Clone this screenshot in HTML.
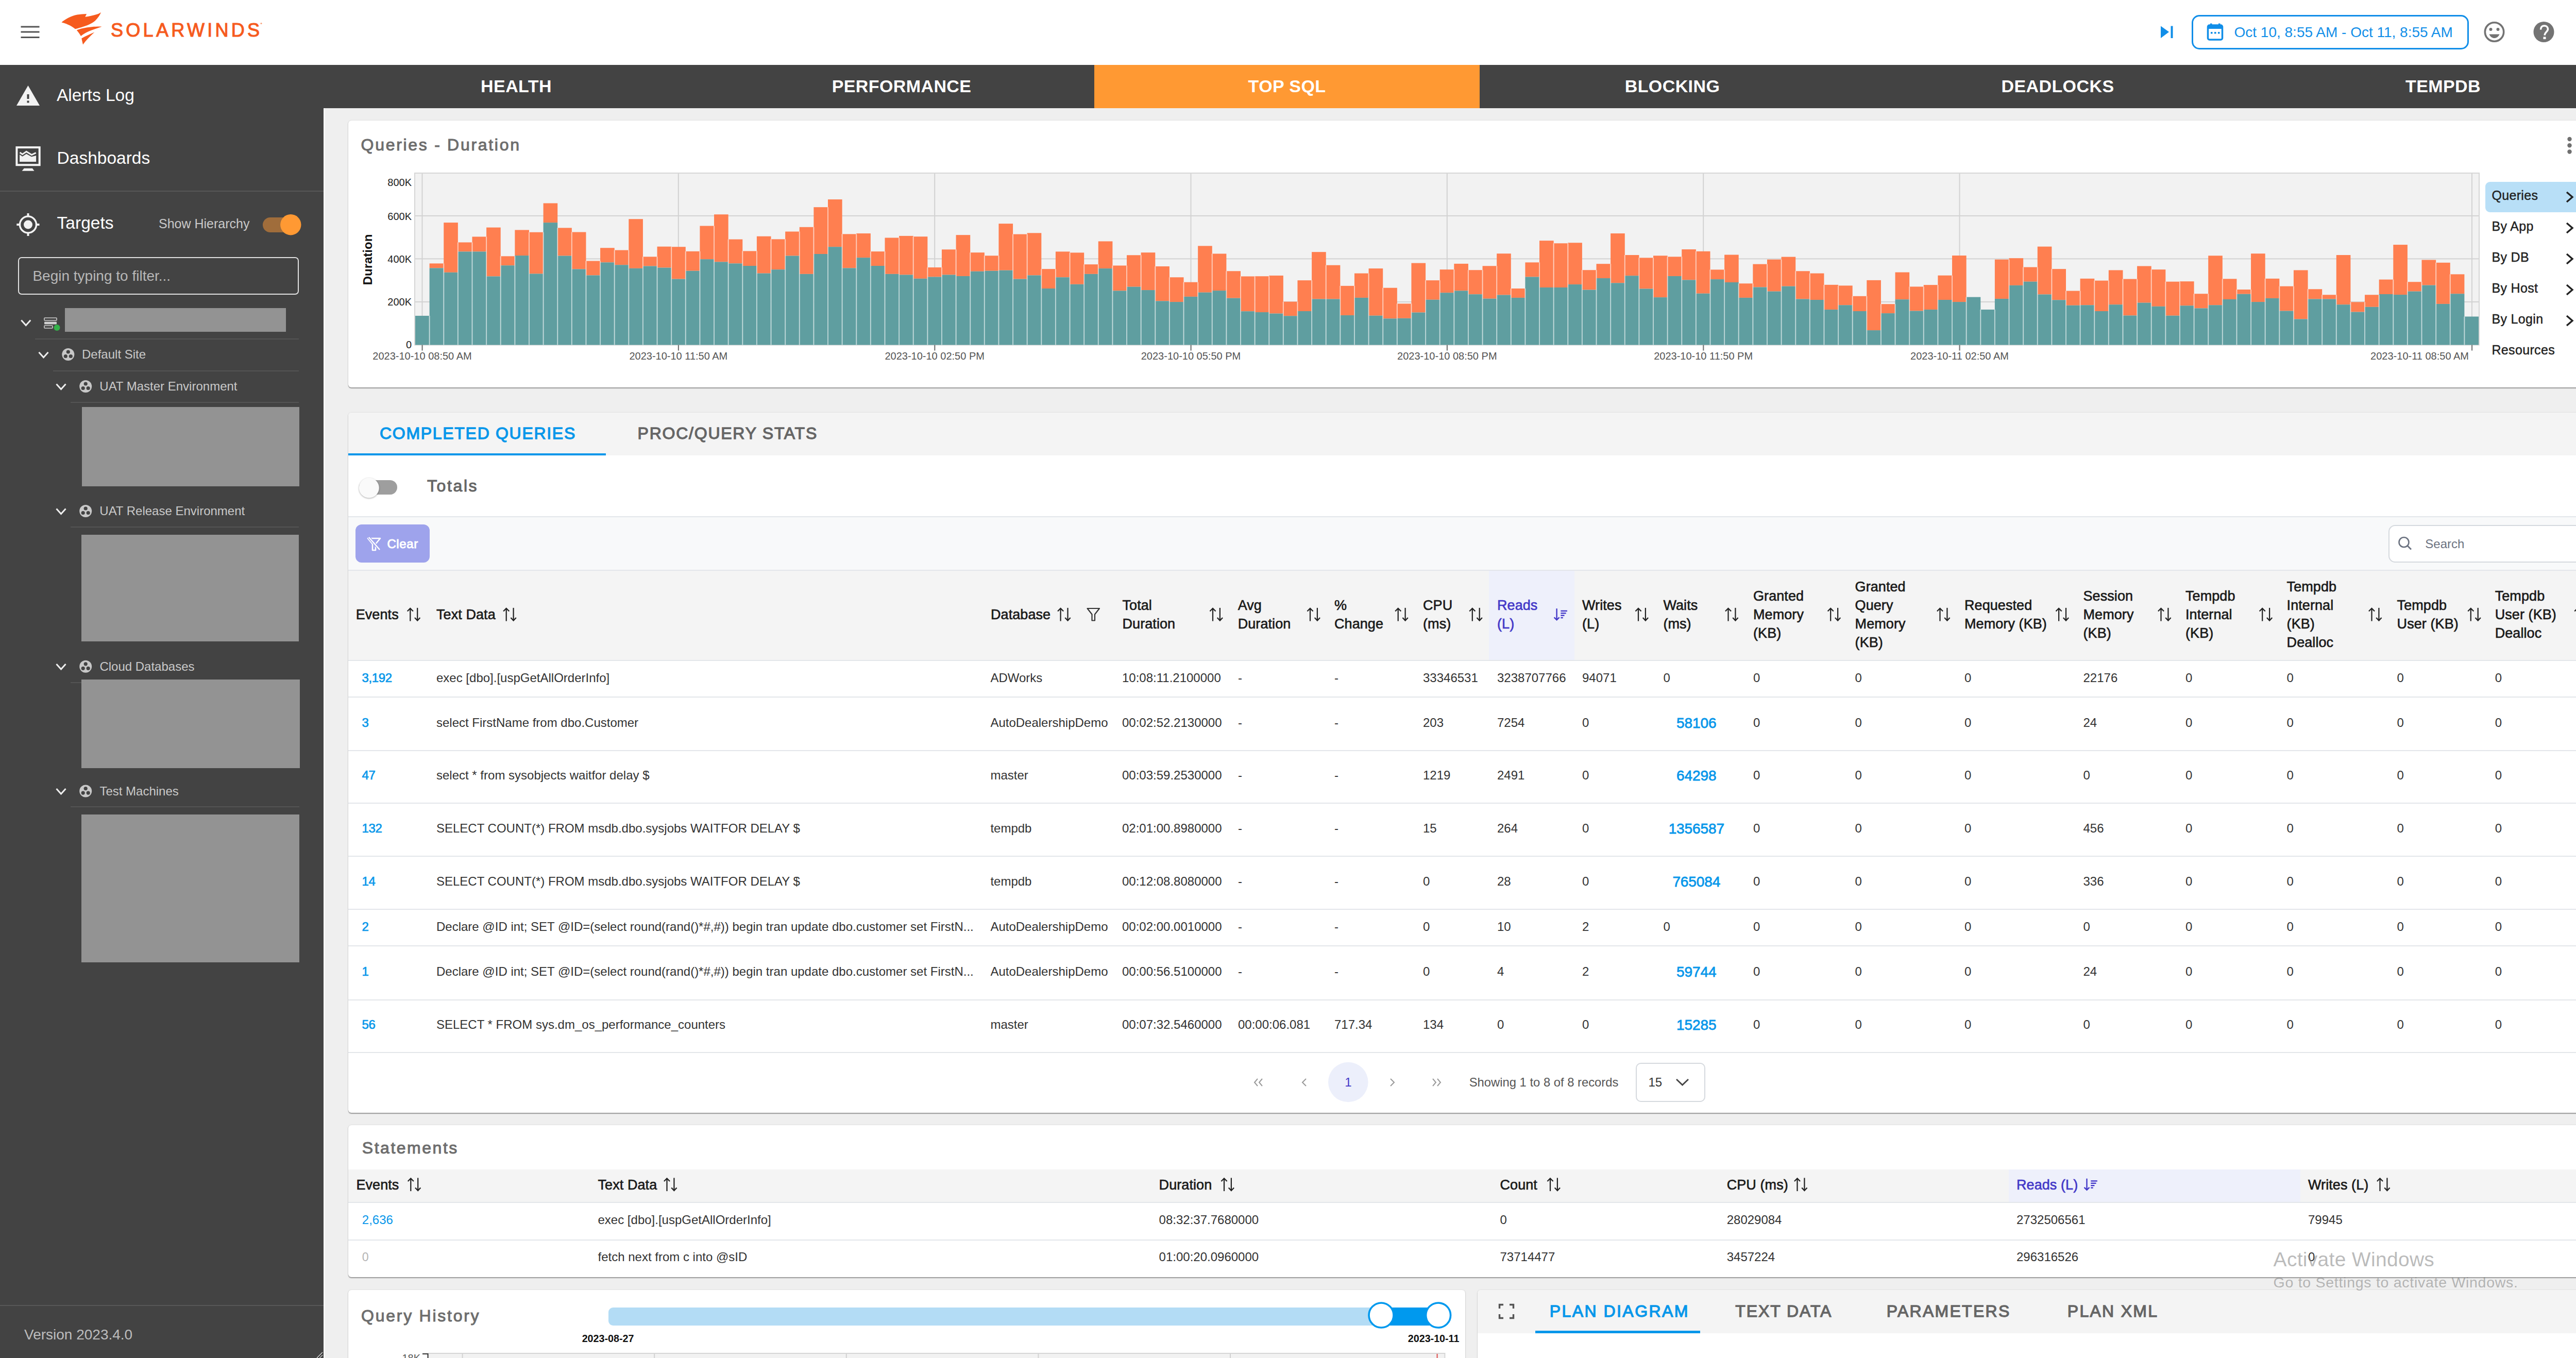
<!DOCTYPE html><html><head><meta charset="utf-8"><style>html,body{margin:0;padding:0;}body{width:5110px;height:2636px;overflow:hidden;position:relative;background:#efefef;font-family:"Liberation Sans", sans-serif;}svg{overflow:visible}</style></head><body><div style="position:absolute;left:0px;top:0px;width:5110px;height:126px;background:#fff"></div>
<svg style="position:absolute;left:30px;top:40px;" width="60" height="45" viewBox="30 40 60 45"><rect x="40.5" y="50.5" width="36" height="3" fill="#555"/><rect x="40.5" y="60.5" width="36" height="3" fill="#555"/><rect x="40.5" y="71" width="36" height="3" fill="#555"/></svg>
<svg style="position:absolute;left:110px;top:15px;" width="100" height="80" viewBox="110 15 100 80"><path d="M119.5,43.6 C125,38 138,31 150,28.6 C156,27.4 162,27 168.1,26.9 L165.3,32.8 C172,32 181,30 189,27.5 C192,26.5 194.5,25 196,24 C194,29 190,35 185,40 C178,46 168,50 158,53 C153,54.5 149,55.6 145.8,56.3 C141,52 133,47 119.5,43.6 Z" fill="#f65b1e"/><path d="M148.8,58.5 C156,55.5 166,53.3 178,52.2 C186,51.6 193,51.5 197.6,51.7 C189,54.5 180,57.5 172,61 C166,63.5 161,66.5 157,70 C154.5,65.5 151.5,61.5 148.8,58.5 Z" fill="#f65b1e"/><path d="M158.3,74.5 C166,70.5 175,66 183.4,62.6 C175,70 167,78.5 161,86.6 C160,82 159,78 158.3,74.5 Z" fill="#f65b1e"/></svg>
<div style="position:absolute;left:215px;top:40.5px;font-size:36px;line-height:36px;color:#f65b1e;font-weight:400;white-space:nowrap;letter-spacing:5.30px;-webkit-text-stroke:1.1px #f65b1e;">SOLARWINDS</div>
<svg style="position:absolute;left:500px;top:40px;" width="12" height="12" viewBox="500 40 12 12"><circle cx="507" cy="45.5" r="1.6" fill="#f8a27a"/></svg>
<svg style="position:absolute;left:4185px;top:45px;" width="40" height="35" viewBox="4185 45 40 35"><path d="M4194,50.5 L4210,62 L4194,74 Z" fill="#118ee8"/><rect x="4213.5" y="50.5" width="4" height="23.5" fill="#118ee8"/></svg>
<div style="position:absolute;left:4254px;top:29px;width:538px;height:67px;box-sizing:border-box;border:3px solid #118ee8;border-radius:15px;background:#fff"></div>
<svg style="position:absolute;left:4280px;top:40px;" width="40" height="42" viewBox="4280 40 40 42"><rect x="4285.5" y="49" width="28" height="28" rx="3" fill="none" stroke="#118ee8" stroke-width="3.5"/><rect x="4285.5" y="49" width="28" height="7" fill="#118ee8"/><rect x="4290" y="45.5" width="3.5" height="6" fill="#118ee8"/><rect x="4306" y="45.5" width="3.5" height="6" fill="#118ee8"/><rect x="4291" y="62" width="3.5" height="3.5" fill="#118ee8"/><rect x="4298" y="62" width="3.5" height="3.5" fill="#118ee8"/><rect x="4305" y="62" width="3.5" height="3.5" fill="#118ee8"/></svg>
<div style="position:absolute;left:4336.5px;top:48.5px;font-size:28px;line-height:28px;color:#118ee8;font-weight:400;white-space:nowrap;">Oct 10, 8:55 AM - Oct 11, 8:55 AM</div>
<svg style="position:absolute;left:4815px;top:36px;" width="53" height="52" viewBox="4815 36 53 52"><circle cx="4841.5" cy="62" r="18.2" fill="none" stroke="#737373" stroke-width="3.6"/><circle cx="4834.5" cy="57" r="3" fill="#737373"/><circle cx="4848.5" cy="57" r="3" fill="#737373"/><path d="M4831.5,66.5 L4851.5,66.5 C4849,72 4845.5,74 4841.5,74 C4837.5,74 4834,72 4831.5,66.5 Z" fill="#737373"/></svg>
<svg style="position:absolute;left:4912px;top:36px;" width="52" height="52" viewBox="4912 36 52 52"><circle cx="4937.5" cy="62" r="20" fill="#737373"/><path d="M4931.5,57.5 C4931.5,52.5 4934.5,50 4938.5,50 C4942.5,50 4945.5,52.5 4945.5,56.5 C4945.5,61.5 4939.5,62 4939,68.5" fill="none" stroke="#fff" stroke-width="3.6"/><rect x="4936.5" y="71.5" width="5" height="4.5" fill="#fff"/></svg>
<svg style="position:absolute;left:5005px;top:38px;" width="57" height="48" viewBox="5005 38 57 48"><circle cx="5026" cy="52.5" r="9.2" fill="#737373"/><path d="M5009.5,81 L5009.5,77 C5009.5,69 5017,66.5 5026,66.5 C5030,66.5 5033.5,67 5036,68 L5040,81 Z" fill="#737373"/><path d="M5046.5,60.5 L5057,64.5 L5057,70 C5057,76 5052.5,80.5 5046.5,82 C5040.5,80.5 5036,76 5036,70 L5036,64.5 Z" fill="#737373" stroke="#fff" stroke-width="2"/><path d="M5047,64 L5053.5,66.5 L5053.5,70 C5053.5,74 5051,77 5047,78.5 Z" fill="#fff"/></svg>
<div style="position:absolute;left:0px;top:126px;width:628px;height:2510px;background:#434343"></div>
<svg style="position:absolute;left:28px;top:160px;" width="54" height="50" viewBox="28 160 54 50"><path d="M54.5,166 L77,205 L32,205 Z" fill="#f2f2f2"/><rect x="52.5" y="183" width="4" height="9" fill="#434343"/><rect x="52.5" y="195.5" width="4" height="4" fill="#434343"/></svg>
<div style="position:absolute;left:110px;top:167.6px;font-size:33.5px;line-height:33.5px;color:#fff;font-weight:400;white-space:nowrap;">Alerts Log</div>
<svg style="position:absolute;left:26px;top:278px;" width="58" height="58" viewBox="26 278 58 58"><rect x="32.4" y="286.1" width="44.3" height="34.1" fill="none" stroke="#f4f4f4" stroke-width="4"/><path d="M38.1,300.1 L43.5,303.7 L51.2,298.8 L61.1,304.2 L70.1,301.9 L70.1,314.1 L38.1,314.1 Z" fill="#f2f2f2"/><polyline points="38.5,296.1 43.5,299.4 51.2,294.2 61.4,300.6 69.7,296.6" fill="none" stroke="#f2f2f2" stroke-width="3"/><path d="M46.7,326.8 L62.9,326.8 L66.5,331.7 L42.6,331.7 Z" fill="#f4f4f4"/></svg>
<div style="position:absolute;left:110.6px;top:290.1px;font-size:33.5px;line-height:33.5px;color:#fff;font-weight:400;white-space:nowrap;">Dashboards</div>
<div style="position:absolute;left:0px;top:370px;width:628px;height:2px;background:#575757"></div>
<svg style="position:absolute;left:28px;top:410px;" width="54" height="52" viewBox="28 410 54 52"><circle cx="54.5" cy="436" r="16" fill="none" stroke="#f2f2f2" stroke-width="3.5"/><circle cx="54.5" cy="436" r="8.5" fill="#f2f2f2"/><rect x="52.5" y="414" width="4" height="6" fill="#f2f2f2"/><rect x="52.5" y="452" width="4" height="6" fill="#f2f2f2"/><rect x="32.3" y="434" width="6" height="4" fill="#f2f2f2"/><rect x="70.5" y="434" width="6" height="4" fill="#f2f2f2"/></svg>
<div style="position:absolute;left:110.6px;top:415.6px;font-size:33.5px;line-height:33.5px;color:#fff;font-weight:400;white-space:nowrap;">Targets</div>
<div style="position:absolute;left:308px;top:421.5px;font-size:25px;line-height:25px;color:#c9c9c9;font-weight:400;white-space:nowrap;">Show Hierarchy</div>
<div style="position:absolute;left:510px;top:422px;width:74px;height:29px;background:#a06d3b;border-radius:15px"></div>
<svg style="position:absolute;left:540px;top:412px;" width="50" height="48" viewBox="540 412 50 48"><circle cx="564.3" cy="436.2" r="20.2" fill="#ff9933"/></svg>
<div style="position:absolute;left:35px;top:499px;width:545px;height:73px;box-sizing:border-box;border:2px solid #e0e0e0;border-radius:7px"></div>
<div style="position:absolute;left:63.4px;top:522.1px;font-size:28px;line-height:28px;color:#b8b8b8;font-weight:400;white-space:nowrap;">Begin typing to filter...</div>
<div style="position:absolute;left:125.5px;top:597.5px;width:429.0px;height:46.0px;background:#939393"></div>
<svg style="position:absolute;left:80px;top:610px;" width="40" height="36" viewBox="80 610 40 36"><polyline points="41.3,621.5 50.3,631.5 59.3,621.5" fill="none" stroke="#eee" stroke-width="3"/><rect x="86" y="617" width="24" height="5" rx="1" fill="none" stroke="#cfcfcf" stroke-width="1.6"/><rect x="86" y="624.5" width="24" height="5" rx="1" fill="#cfcfcf"/><rect x="86" y="632" width="16" height="5" rx="1" fill="none" stroke="#cfcfcf" stroke-width="1.6"/><circle cx="110.5" cy="636" r="6" fill="#34b24a"/></svg>
<div style="position:absolute;left:68px;top:657px;width:512px;height:2px;background:#545454"></div>
<svg style="position:absolute;left:70px;top:670px;" width="80" height="40" viewBox="70 670 80 40"><polyline points="75.5,683.7 84.5,693.7 93.5,683.7" fill="none" stroke="#eee" stroke-width="3"/><circle cx="132.3" cy="688" r="12" fill="#c8c8c8"/><circle cx="132.3" cy="683" r="3.6" fill="#434343"/><circle cx="127.30000000000001" cy="691.5" r="3.6" fill="#434343"/><circle cx="137.3" cy="691.5" r="3.6" fill="#434343"/></svg>
<div style="position:absolute;left:159px;top:675.7px;font-size:24px;line-height:24px;color:#c9c9c9;font-weight:400;white-space:nowrap;">Default Site</div>
<div style="position:absolute;left:102.6px;top:719px;width:477.4px;height:2px;background:#545454"></div>
<svg style="position:absolute;left:100px;top:735px;" width="90" height="30" viewBox="100 735 90 30"><polyline points="109.5,745.5 118.5,755.5 127.5,745.5" fill="none" stroke="#eee" stroke-width="3"/><circle cx="166.2" cy="750" r="12" fill="#c8c8c8"/><circle cx="166.2" cy="745" r="3.6" fill="#434343"/><circle cx="161.2" cy="753.5" r="3.6" fill="#434343"/><circle cx="171.2" cy="753.5" r="3.6" fill="#434343"/></svg>
<div style="position:absolute;left:193.3px;top:737.7px;font-size:24px;line-height:24px;color:#c9c9c9;font-weight:400;white-space:nowrap;">UAT Master Environment</div>
<div style="position:absolute;left:137.4px;top:780px;width:442.6px;height:2px;background:#545454"></div>
<div style="position:absolute;left:159px;top:790px;width:421.6px;height:154px;background:#939393"></div>
<svg style="position:absolute;left:100px;top:977px;" width="90" height="30" viewBox="100 977 90 30"><polyline points="109.5,987.5 118.5,997.5 127.5,987.5" fill="none" stroke="#eee" stroke-width="3"/><circle cx="166.2" cy="992" r="12" fill="#c8c8c8"/><circle cx="166.2" cy="987" r="3.6" fill="#434343"/><circle cx="161.2" cy="995.5" r="3.6" fill="#434343"/><circle cx="171.2" cy="995.5" r="3.6" fill="#434343"/></svg>
<div style="position:absolute;left:193.3px;top:980.2px;font-size:24px;line-height:24px;color:#c9c9c9;font-weight:400;white-space:nowrap;">UAT Release Environment</div>
<div style="position:absolute;left:137px;top:1022px;width:443px;height:2px;background:#545454"></div>
<div style="position:absolute;left:158.4px;top:1037.6px;width:421.6px;height:207.20000000000005px;background:#939393"></div>
<svg style="position:absolute;left:100px;top:1279px;" width="90" height="30" viewBox="100 1279 90 30"><polyline points="109.5,1289.0 118.5,1299.0 127.5,1289.0" fill="none" stroke="#eee" stroke-width="3"/><circle cx="166.2" cy="1293.8" r="12" fill="#c8c8c8"/><circle cx="166.2" cy="1288.8" r="3.6" fill="#434343"/><circle cx="161.2" cy="1297.3" r="3.6" fill="#434343"/><circle cx="171.2" cy="1297.3" r="3.6" fill="#434343"/></svg>
<div style="position:absolute;left:193.4px;top:1281.9px;font-size:24px;line-height:24px;color:#c9c9c9;font-weight:400;white-space:nowrap;">Cloud Databases</div>
<div style="position:absolute;left:137px;top:1324px;width:23px;height:2px;background:#545454"></div>
<div style="position:absolute;left:158px;top:1318.5px;width:423.5px;height:172.9000000000001px;background:#939393"></div>
<svg style="position:absolute;left:100px;top:1521px;" width="90" height="30" viewBox="100 1521 90 30"><polyline points="109.5,1531.0 118.5,1541.0 127.5,1531.0" fill="none" stroke="#eee" stroke-width="3"/><circle cx="166.2" cy="1535.6" r="12" fill="#c8c8c8"/><circle cx="166.2" cy="1530.6" r="3.6" fill="#434343"/><circle cx="161.2" cy="1539.1" r="3.6" fill="#434343"/><circle cx="171.2" cy="1539.1" r="3.6" fill="#434343"/></svg>
<div style="position:absolute;left:193.4px;top:1523.7px;font-size:24px;line-height:24px;color:#c9c9c9;font-weight:400;white-space:nowrap;">Test Machines</div>
<div style="position:absolute;left:137px;top:1565px;width:443.6px;height:2px;background:#545454"></div>
<div style="position:absolute;left:157.5px;top:1581.4px;width:423.1px;height:286.5999999999999px;background:#939393"></div>
<div style="position:absolute;left:0px;top:2533px;width:628px;height:2px;background:#575757"></div>
<div style="position:absolute;left:47px;top:2576.7px;font-size:28px;line-height:28px;color:#bdbdbd;font-weight:400;white-space:nowrap;">Version 2023.4.0</div>
<svg style="position:absolute;left:610px;top:2615px;" width="18" height="21" viewBox="610 2615 18 21"><path d="M626,2625 L615,2636 M626,2630 L620,2636" stroke="#cfcfcf" stroke-width="1.6"/><path d="M627,2627 L618,2636" stroke="#222" stroke-width="1.2"/></svg>
<div style="position:absolute;left:628px;top:126px;width:4482px;height:84px;background:#434343"></div>
<div style="position:absolute;left:2124px;top:126px;width:748px;height:84px;background:#ff9933"></div>
<div style="position:absolute;left:-498px;width:3000px;text-align:center;top:149.7px;font-size:34px;line-height:34px;color:#fff;font-weight:700;white-space:nowrap;letter-spacing:0.40px;">HEALTH</div>
<div style="position:absolute;left:250px;width:3000px;text-align:center;top:149.7px;font-size:34px;line-height:34px;color:#fff;font-weight:700;white-space:nowrap;letter-spacing:0.40px;">PERFORMANCE</div>
<div style="position:absolute;left:998px;width:3000px;text-align:center;top:149.7px;font-size:34px;line-height:34px;color:#fff;font-weight:700;white-space:nowrap;letter-spacing:0.40px;">TOP SQL</div>
<div style="position:absolute;left:1746px;width:3000px;text-align:center;top:149.7px;font-size:34px;line-height:34px;color:#fff;font-weight:700;white-space:nowrap;letter-spacing:0.40px;">BLOCKING</div>
<div style="position:absolute;left:2494px;width:3000px;text-align:center;top:149.7px;font-size:34px;line-height:34px;color:#fff;font-weight:700;white-space:nowrap;letter-spacing:0.40px;">DEADLOCKS</div>
<div style="position:absolute;left:3242px;width:3000px;text-align:center;top:149.7px;font-size:34px;line-height:34px;color:#fff;font-weight:700;white-space:nowrap;letter-spacing:0.40px;">TEMPDB</div>
<div style="position:absolute;left:5083px;top:210px;width:27px;height:2426px;background:#f0f0f0"></div>
<div style="position:absolute;left:5088px;top:244px;width:22px;height:1945px;background:#c1c1c1"></div>
<svg style="position:absolute;left:5088px;top:215px;" width="22" height="25" viewBox="5088 215 22 25"><path d="M5093.5,232 L5099,224.5 L5104.5,232 Z" fill="#a3a3a3"/></svg>
<svg style="position:absolute;left:5088px;top:2615px;" width="22" height="21" viewBox="5088 2615 22 21"><path d="M5093.5,2621 L5099,2628.5 L5104.5,2621 Z" fill="#505050"/></svg>
<div style="position:absolute;left:628px;top:210px;width:4455px;height:2426px;background:#efefef"></div>
<div style="position:absolute;left:628px;top:210px;width:2.5px;height:2426px;background:#fbfbfb"></div>
<div style="position:absolute;left:676px;top:234px;width:4359px;height:518px;background:#fff;border-radius:6px;box-shadow:0 1.5px 1.5px rgba(0,0,0,0.34), 0 0 2.5px rgba(0,0,0,0.12);"></div>
<div style="position:absolute;left:700.6px;top:265.2px;font-size:32px;line-height:32px;color:#6e6e6e;font-weight:400;white-space:nowrap;letter-spacing:2.70px;-webkit-text-stroke:1.05px #6e6e6e;">Queries - Duration</div>
<svg style="position:absolute;left:4975px;top:260px;" width="25" height="45" viewBox="4975 260 25 45"><circle cx="4987.5" cy="270" r="4.2" fill="#707070"/><circle cx="4987.5" cy="282.3" r="4.2" fill="#707070"/><circle cx="4987.5" cy="294.5" r="4.2" fill="#707070"/></svg>
<svg style="position:absolute;left:790px;top:325px;" width="4040" height="365" viewBox="790 325 4040 365"><rect x="806" y="337" width="4005" height="332.5" fill="#f2f2f2"/><rect x="806" y="585.0" width="4005" height="2" fill="#d2d2d2"/><rect x="806" y="501.4" width="4005" height="2" fill="#d2d2d2"/><rect x="806" y="417.9" width="4005" height="2" fill="#d2d2d2"/><rect x="818.5" y="337" width="2" height="332.5" fill="#d2d2d2"/><rect x="1315.8" y="337" width="2" height="332.5" fill="#d2d2d2"/><rect x="1813.2" y="337" width="2" height="332.5" fill="#d2d2d2"/><rect x="2310.5" y="337" width="2" height="332.5" fill="#d2d2d2"/><rect x="2807.8" y="337" width="2" height="332.5" fill="#d2d2d2"/><rect x="3305.2" y="337" width="2" height="332.5" fill="#d2d2d2"/><rect x="3802.5" y="337" width="2" height="332.5" fill="#d2d2d2"/><rect x="4797.0" y="337" width="2" height="332.5" fill="#d2d2d2"/><rect x="805" y="336" width="4007" height="333.5" fill="none" stroke="#d6d6d6" stroke-width="2"/><rect x="806.00" y="612.96" width="27.62" height="56.54" fill="#5f9ea0"/><rect x="833.62" y="511.40" width="27.62" height="8.95" fill="#ff7f50"/><rect x="833.62" y="520.35" width="27.62" height="149.15" fill="#5f9ea0"/><rect x="861.24" y="432.10" width="27.62" height="96.70" fill="#ff7f50"/><rect x="861.24" y="528.80" width="27.62" height="140.70" fill="#5f9ea0"/><rect x="888.86" y="470.47" width="27.62" height="17.91" fill="#ff7f50"/><rect x="888.86" y="488.38" width="27.62" height="181.12" fill="#5f9ea0"/><rect x="916.48" y="459.47" width="27.62" height="28.91" fill="#ff7f50"/><rect x="916.48" y="488.38" width="27.62" height="181.12" fill="#5f9ea0"/><rect x="944.10" y="441.56" width="27.62" height="94.91" fill="#ff7f50"/><rect x="944.10" y="536.47" width="27.62" height="133.03" fill="#5f9ea0"/><rect x="971.72" y="497.33" width="27.62" height="17.91" fill="#ff7f50"/><rect x="971.72" y="515.24" width="27.62" height="154.26" fill="#5f9ea0"/><rect x="999.34" y="446.42" width="27.62" height="49.63" fill="#ff7f50"/><rect x="999.34" y="496.05" width="27.62" height="173.45" fill="#5f9ea0"/><rect x="1026.97" y="450.77" width="27.62" height="80.58" fill="#ff7f50"/><rect x="1026.97" y="531.35" width="27.62" height="138.15" fill="#5f9ea0"/><rect x="1054.59" y="394.49" width="27.62" height="37.61" fill="#ff7f50"/><rect x="1054.59" y="432.10" width="27.62" height="237.40" fill="#5f9ea0"/><rect x="1082.21" y="442.33" width="27.62" height="54.23" fill="#ff7f50"/><rect x="1082.21" y="496.56" width="27.62" height="172.94" fill="#5f9ea0"/><rect x="1109.83" y="450.51" width="27.62" height="71.89" fill="#ff7f50"/><rect x="1109.83" y="522.40" width="27.62" height="147.10" fill="#5f9ea0"/><rect x="1137.45" y="506.54" width="27.62" height="27.88" fill="#ff7f50"/><rect x="1137.45" y="534.42" width="27.62" height="135.08" fill="#5f9ea0"/><rect x="1165.07" y="481.21" width="27.62" height="28.14" fill="#ff7f50"/><rect x="1165.07" y="509.35" width="27.62" height="160.15" fill="#5f9ea0"/><rect x="1192.69" y="485.56" width="27.62" height="28.65" fill="#ff7f50"/><rect x="1192.69" y="514.21" width="27.62" height="155.29" fill="#5f9ea0"/><rect x="1220.31" y="425.19" width="27.62" height="95.68" fill="#ff7f50"/><rect x="1220.31" y="520.86" width="27.62" height="148.64" fill="#5f9ea0"/><rect x="1247.93" y="498.35" width="27.62" height="18.16" fill="#ff7f50"/><rect x="1247.93" y="516.52" width="27.62" height="152.98" fill="#5f9ea0"/><rect x="1275.55" y="478.65" width="27.62" height="40.93" fill="#ff7f50"/><rect x="1275.55" y="519.59" width="27.62" height="149.91" fill="#5f9ea0"/><rect x="1303.17" y="479.17" width="27.62" height="62.42" fill="#ff7f50"/><rect x="1303.17" y="541.59" width="27.62" height="127.91" fill="#5f9ea0"/><rect x="1330.79" y="487.86" width="27.62" height="37.86" fill="#ff7f50"/><rect x="1330.79" y="525.73" width="27.62" height="143.77" fill="#5f9ea0"/><rect x="1358.41" y="438.49" width="27.62" height="64.72" fill="#ff7f50"/><rect x="1358.41" y="503.21" width="27.62" height="166.29" fill="#5f9ea0"/><rect x="1386.03" y="416.23" width="27.62" height="92.10" fill="#ff7f50"/><rect x="1386.03" y="508.33" width="27.62" height="161.17" fill="#5f9ea0"/><rect x="1413.66" y="464.58" width="27.62" height="46.82" fill="#ff7f50"/><rect x="1413.66" y="511.40" width="27.62" height="158.10" fill="#5f9ea0"/><rect x="1441.28" y="487.35" width="27.62" height="28.65" fill="#ff7f50"/><rect x="1441.28" y="516.00" width="27.62" height="153.50" fill="#5f9ea0"/><rect x="1468.90" y="458.70" width="27.62" height="71.89" fill="#ff7f50"/><rect x="1468.90" y="530.59" width="27.62" height="138.91" fill="#5f9ea0"/><rect x="1496.52" y="464.33" width="27.62" height="58.84" fill="#ff7f50"/><rect x="1496.52" y="523.17" width="27.62" height="146.33" fill="#5f9ea0"/><rect x="1524.14" y="449.49" width="27.62" height="47.07" fill="#ff7f50"/><rect x="1524.14" y="496.56" width="27.62" height="172.94" fill="#5f9ea0"/><rect x="1551.76" y="440.79" width="27.62" height="91.07" fill="#ff7f50"/><rect x="1551.76" y="531.86" width="27.62" height="137.64" fill="#5f9ea0"/><rect x="1579.38" y="402.16" width="27.62" height="90.82" fill="#ff7f50"/><rect x="1579.38" y="492.98" width="27.62" height="176.52" fill="#5f9ea0"/><rect x="1607.00" y="387.07" width="27.62" height="92.10" fill="#ff7f50"/><rect x="1607.00" y="479.17" width="27.62" height="190.33" fill="#5f9ea0"/><rect x="1634.62" y="454.35" width="27.62" height="66.00" fill="#ff7f50"/><rect x="1634.62" y="520.35" width="27.62" height="149.15" fill="#5f9ea0"/><rect x="1662.24" y="453.07" width="27.62" height="47.07" fill="#ff7f50"/><rect x="1662.24" y="500.14" width="27.62" height="169.36" fill="#5f9ea0"/><rect x="1689.86" y="488.12" width="27.62" height="27.88" fill="#ff7f50"/><rect x="1689.86" y="516.00" width="27.62" height="153.50" fill="#5f9ea0"/><rect x="1717.48" y="461.51" width="27.62" height="70.35" fill="#ff7f50"/><rect x="1717.48" y="531.86" width="27.62" height="137.64" fill="#5f9ea0"/><rect x="1745.10" y="457.93" width="27.62" height="75.47" fill="#ff7f50"/><rect x="1745.10" y="533.40" width="27.62" height="136.10" fill="#5f9ea0"/><rect x="1772.72" y="459.21" width="27.62" height="81.61" fill="#ff7f50"/><rect x="1772.72" y="540.82" width="27.62" height="128.68" fill="#5f9ea0"/><rect x="1800.34" y="519.07" width="27.62" height="18.42" fill="#ff7f50"/><rect x="1800.34" y="537.49" width="27.62" height="132.01" fill="#5f9ea0"/><rect x="1827.97" y="484.28" width="27.62" height="49.12" fill="#ff7f50"/><rect x="1827.97" y="533.40" width="27.62" height="136.10" fill="#5f9ea0"/><rect x="1855.59" y="456.14" width="27.62" height="79.82" fill="#ff7f50"/><rect x="1855.59" y="535.96" width="27.62" height="133.54" fill="#5f9ea0"/><rect x="1883.21" y="490.17" width="27.62" height="36.58" fill="#ff7f50"/><rect x="1883.21" y="526.75" width="27.62" height="142.75" fill="#5f9ea0"/><rect x="1910.83" y="496.31" width="27.62" height="29.42" fill="#ff7f50"/><rect x="1910.83" y="525.73" width="27.62" height="143.77" fill="#5f9ea0"/><rect x="1938.45" y="434.14" width="27.62" height="90.56" fill="#ff7f50"/><rect x="1938.45" y="524.70" width="27.62" height="144.80" fill="#5f9ea0"/><rect x="1966.07" y="454.61" width="27.62" height="86.98" fill="#ff7f50"/><rect x="1966.07" y="541.59" width="27.62" height="127.91" fill="#5f9ea0"/><rect x="1993.69" y="452.30" width="27.62" height="82.12" fill="#ff7f50"/><rect x="1993.69" y="534.42" width="27.62" height="135.08" fill="#5f9ea0"/><rect x="2021.31" y="522.14" width="27.62" height="37.86" fill="#ff7f50"/><rect x="2021.31" y="560.01" width="27.62" height="109.49" fill="#5f9ea0"/><rect x="2048.93" y="488.38" width="27.62" height="49.88" fill="#ff7f50"/><rect x="2048.93" y="538.26" width="27.62" height="131.24" fill="#5f9ea0"/><rect x="2076.55" y="490.42" width="27.62" height="61.40" fill="#ff7f50"/><rect x="2076.55" y="551.82" width="27.62" height="117.68" fill="#5f9ea0"/><rect x="2104.17" y="513.19" width="27.62" height="18.67" fill="#ff7f50"/><rect x="2104.17" y="531.86" width="27.62" height="137.64" fill="#5f9ea0"/><rect x="2131.79" y="468.42" width="27.62" height="52.70" fill="#ff7f50"/><rect x="2131.79" y="521.12" width="27.62" height="148.38" fill="#5f9ea0"/><rect x="2159.41" y="515.49" width="27.62" height="48.86" fill="#ff7f50"/><rect x="2159.41" y="564.35" width="27.62" height="105.15" fill="#5f9ea0"/><rect x="2187.03" y="495.28" width="27.62" height="61.40" fill="#ff7f50"/><rect x="2187.03" y="556.68" width="27.62" height="112.82" fill="#5f9ea0"/><rect x="2214.66" y="490.17" width="27.62" height="72.91" fill="#ff7f50"/><rect x="2214.66" y="563.07" width="27.62" height="106.43" fill="#5f9ea0"/><rect x="2242.28" y="517.03" width="27.62" height="67.28" fill="#ff7f50"/><rect x="2242.28" y="584.31" width="27.62" height="85.19" fill="#5f9ea0"/><rect x="2269.90" y="538.26" width="27.62" height="47.84" fill="#ff7f50"/><rect x="2269.90" y="586.10" width="27.62" height="83.40" fill="#5f9ea0"/><rect x="2297.52" y="547.73" width="27.62" height="28.14" fill="#ff7f50"/><rect x="2297.52" y="575.87" width="27.62" height="93.63" fill="#5f9ea0"/><rect x="2325.14" y="477.38" width="27.62" height="90.30" fill="#ff7f50"/><rect x="2325.14" y="567.68" width="27.62" height="101.82" fill="#5f9ea0"/><rect x="2352.76" y="492.47" width="27.62" height="71.63" fill="#ff7f50"/><rect x="2352.76" y="564.10" width="27.62" height="105.40" fill="#5f9ea0"/><rect x="2380.38" y="526.24" width="27.62" height="52.44" fill="#ff7f50"/><rect x="2380.38" y="578.68" width="27.62" height="90.82" fill="#5f9ea0"/><rect x="2408.00" y="536.47" width="27.62" height="67.79" fill="#ff7f50"/><rect x="2408.00" y="604.26" width="27.62" height="65.24" fill="#5f9ea0"/><rect x="2435.62" y="536.21" width="27.62" height="69.84" fill="#ff7f50"/><rect x="2435.62" y="606.05" width="27.62" height="63.45" fill="#5f9ea0"/><rect x="2463.24" y="534.93" width="27.62" height="73.68" fill="#ff7f50"/><rect x="2463.24" y="608.61" width="27.62" height="60.89" fill="#5f9ea0"/><rect x="2490.86" y="585.59" width="27.62" height="27.63" fill="#ff7f50"/><rect x="2490.86" y="613.22" width="27.62" height="56.28" fill="#5f9ea0"/><rect x="2518.48" y="544.14" width="27.62" height="59.86" fill="#ff7f50"/><rect x="2518.48" y="604.01" width="27.62" height="65.49" fill="#5f9ea0"/><rect x="2546.10" y="489.14" width="27.62" height="91.33" fill="#ff7f50"/><rect x="2546.10" y="580.47" width="27.62" height="89.03" fill="#5f9ea0"/><rect x="2573.72" y="514.72" width="27.62" height="65.75" fill="#ff7f50"/><rect x="2573.72" y="580.47" width="27.62" height="89.03" fill="#5f9ea0"/><rect x="2601.34" y="554.89" width="27.62" height="57.05" fill="#ff7f50"/><rect x="2601.34" y="611.94" width="27.62" height="57.56" fill="#5f9ea0"/><rect x="2628.97" y="530.59" width="27.62" height="47.33" fill="#ff7f50"/><rect x="2628.97" y="577.91" width="27.62" height="91.59" fill="#5f9ea0"/><rect x="2656.59" y="521.12" width="27.62" height="91.58" fill="#ff7f50"/><rect x="2656.59" y="612.70" width="27.62" height="56.80" fill="#5f9ea0"/><rect x="2684.21" y="558.73" width="27.62" height="59.61" fill="#ff7f50"/><rect x="2684.21" y="618.33" width="27.62" height="51.17" fill="#5f9ea0"/><rect x="2711.83" y="589.42" width="27.62" height="28.40" fill="#ff7f50"/><rect x="2711.83" y="617.82" width="27.62" height="51.68" fill="#5f9ea0"/><rect x="2739.45" y="510.63" width="27.62" height="95.93" fill="#ff7f50"/><rect x="2739.45" y="606.56" width="27.62" height="62.94" fill="#5f9ea0"/><rect x="2767.07" y="544.14" width="27.62" height="37.61" fill="#ff7f50"/><rect x="2767.07" y="581.75" width="27.62" height="87.75" fill="#5f9ea0"/><rect x="2794.69" y="523.17" width="27.62" height="45.02" fill="#ff7f50"/><rect x="2794.69" y="568.19" width="27.62" height="101.31" fill="#5f9ea0"/><rect x="2822.31" y="511.91" width="27.62" height="52.44" fill="#ff7f50"/><rect x="2822.31" y="564.35" width="27.62" height="105.15" fill="#5f9ea0"/><rect x="2849.93" y="524.19" width="27.62" height="47.07" fill="#ff7f50"/><rect x="2849.93" y="571.26" width="27.62" height="98.24" fill="#5f9ea0"/><rect x="2877.55" y="516.26" width="27.62" height="63.44" fill="#ff7f50"/><rect x="2877.55" y="579.70" width="27.62" height="89.80" fill="#5f9ea0"/><rect x="2905.17" y="492.21" width="27.62" height="80.33" fill="#ff7f50"/><rect x="2905.17" y="572.54" width="27.62" height="96.96" fill="#5f9ea0"/><rect x="2932.79" y="560.01" width="27.62" height="17.91" fill="#ff7f50"/><rect x="2932.79" y="577.91" width="27.62" height="91.59" fill="#5f9ea0"/><rect x="2960.41" y="509.35" width="27.62" height="28.14" fill="#ff7f50"/><rect x="2960.41" y="537.49" width="27.62" height="132.01" fill="#5f9ea0"/><rect x="2988.03" y="467.14" width="27.62" height="90.82" fill="#ff7f50"/><rect x="2988.03" y="557.96" width="27.62" height="111.54" fill="#5f9ea0"/><rect x="3015.66" y="472.26" width="27.62" height="85.70" fill="#ff7f50"/><rect x="3015.66" y="557.96" width="27.62" height="111.54" fill="#5f9ea0"/><rect x="3043.28" y="471.24" width="27.62" height="80.84" fill="#ff7f50"/><rect x="3043.28" y="552.07" width="27.62" height="117.43" fill="#5f9ea0"/><rect x="3070.90" y="524.19" width="27.62" height="38.37" fill="#ff7f50"/><rect x="3070.90" y="562.56" width="27.62" height="106.94" fill="#5f9ea0"/><rect x="3098.52" y="512.17" width="27.62" height="27.88" fill="#ff7f50"/><rect x="3098.52" y="540.05" width="27.62" height="129.45" fill="#5f9ea0"/><rect x="3126.14" y="453.07" width="27.62" height="96.19" fill="#ff7f50"/><rect x="3126.14" y="549.26" width="27.62" height="120.24" fill="#5f9ea0"/><rect x="3153.76" y="495.03" width="27.62" height="40.16" fill="#ff7f50"/><rect x="3153.76" y="535.19" width="27.62" height="134.31" fill="#5f9ea0"/><rect x="3181.38" y="500.40" width="27.62" height="60.12" fill="#ff7f50"/><rect x="3181.38" y="560.52" width="27.62" height="108.98" fill="#5f9ea0"/><rect x="3209.00" y="496.31" width="27.62" height="80.84" fill="#ff7f50"/><rect x="3209.00" y="577.15" width="27.62" height="92.35" fill="#5f9ea0"/><rect x="3236.62" y="498.35" width="27.62" height="37.61" fill="#ff7f50"/><rect x="3236.62" y="535.96" width="27.62" height="133.54" fill="#5f9ea0"/><rect x="3264.24" y="484.03" width="27.62" height="59.35" fill="#ff7f50"/><rect x="3264.24" y="543.38" width="27.62" height="126.12" fill="#5f9ea0"/><rect x="3291.86" y="487.86" width="27.62" height="81.86" fill="#ff7f50"/><rect x="3291.86" y="569.73" width="27.62" height="99.77" fill="#5f9ea0"/><rect x="3319.48" y="523.42" width="27.62" height="18.67" fill="#ff7f50"/><rect x="3319.48" y="542.10" width="27.62" height="127.40" fill="#5f9ea0"/><rect x="3347.10" y="494.52" width="27.62" height="53.47" fill="#ff7f50"/><rect x="3347.10" y="547.98" width="27.62" height="121.52" fill="#5f9ea0"/><rect x="3374.72" y="550.28" width="27.62" height="27.63" fill="#ff7f50"/><rect x="3374.72" y="577.91" width="27.62" height="91.59" fill="#5f9ea0"/><rect x="3402.34" y="512.68" width="27.62" height="44.77" fill="#ff7f50"/><rect x="3402.34" y="557.45" width="27.62" height="112.05" fill="#5f9ea0"/><rect x="3429.97" y="503.72" width="27.62" height="61.91" fill="#ff7f50"/><rect x="3429.97" y="565.63" width="27.62" height="103.87" fill="#5f9ea0"/><rect x="3457.59" y="498.61" width="27.62" height="57.05" fill="#ff7f50"/><rect x="3457.59" y="555.66" width="27.62" height="113.84" fill="#5f9ea0"/><rect x="3485.21" y="526.24" width="27.62" height="54.23" fill="#ff7f50"/><rect x="3485.21" y="580.47" width="27.62" height="89.03" fill="#5f9ea0"/><rect x="3512.83" y="530.59" width="27.62" height="51.42" fill="#ff7f50"/><rect x="3512.83" y="582.01" width="27.62" height="87.49" fill="#5f9ea0"/><rect x="3540.45" y="552.84" width="27.62" height="48.09" fill="#ff7f50"/><rect x="3540.45" y="600.94" width="27.62" height="68.56" fill="#5f9ea0"/><rect x="3568.07" y="554.38" width="27.62" height="37.86" fill="#ff7f50"/><rect x="3568.07" y="592.24" width="27.62" height="77.26" fill="#5f9ea0"/><rect x="3595.69" y="574.84" width="27.62" height="29.16" fill="#ff7f50"/><rect x="3595.69" y="604.01" width="27.62" height="65.49" fill="#5f9ea0"/><rect x="3623.31" y="543.89" width="27.62" height="97.21" fill="#ff7f50"/><rect x="3623.31" y="641.10" width="27.62" height="28.40" fill="#5f9ea0"/><rect x="3650.93" y="590.19" width="27.62" height="17.91" fill="#ff7f50"/><rect x="3650.93" y="608.10" width="27.62" height="61.40" fill="#5f9ea0"/><rect x="3678.55" y="528.54" width="27.62" height="52.70" fill="#ff7f50"/><rect x="3678.55" y="581.24" width="27.62" height="88.26" fill="#5f9ea0"/><rect x="3706.17" y="556.42" width="27.62" height="47.07" fill="#ff7f50"/><rect x="3706.17" y="603.49" width="27.62" height="66.01" fill="#5f9ea0"/><rect x="3733.79" y="553.10" width="27.62" height="47.84" fill="#ff7f50"/><rect x="3733.79" y="600.94" width="27.62" height="68.56" fill="#5f9ea0"/><rect x="3761.41" y="534.68" width="27.62" height="47.33" fill="#ff7f50"/><rect x="3761.41" y="582.01" width="27.62" height="87.49" fill="#5f9ea0"/><rect x="3789.03" y="496.05" width="27.62" height="90.05" fill="#ff7f50"/><rect x="3789.03" y="586.10" width="27.62" height="83.40" fill="#5f9ea0"/><rect x="3816.66" y="576.63" width="27.62" height="92.87" fill="#5f9ea0"/><rect x="3844.28" y="600.94" width="27.62" height="68.56" fill="#5f9ea0"/><rect x="3871.90" y="503.72" width="27.62" height="76.23" fill="#ff7f50"/><rect x="3871.90" y="579.96" width="27.62" height="89.54" fill="#5f9ea0"/><rect x="3899.52" y="501.17" width="27.62" height="52.70" fill="#ff7f50"/><rect x="3899.52" y="553.87" width="27.62" height="115.63" fill="#5f9ea0"/><rect x="3927.14" y="518.56" width="27.62" height="28.14" fill="#ff7f50"/><rect x="3927.14" y="546.70" width="27.62" height="122.80" fill="#5f9ea0"/><rect x="3954.76" y="478.65" width="27.62" height="92.86" fill="#ff7f50"/><rect x="3954.76" y="571.52" width="27.62" height="97.98" fill="#5f9ea0"/><rect x="3982.38" y="522.14" width="27.62" height="60.12" fill="#ff7f50"/><rect x="3982.38" y="582.26" width="27.62" height="87.24" fill="#5f9ea0"/><rect x="4010.00" y="564.61" width="27.62" height="28.14" fill="#ff7f50"/><rect x="4010.00" y="592.75" width="27.62" height="76.75" fill="#5f9ea0"/><rect x="4037.62" y="540.82" width="27.62" height="51.42" fill="#ff7f50"/><rect x="4037.62" y="592.24" width="27.62" height="77.26" fill="#5f9ea0"/><rect x="4065.24" y="544.66" width="27.62" height="59.35" fill="#ff7f50"/><rect x="4065.24" y="604.01" width="27.62" height="65.49" fill="#5f9ea0"/><rect x="4092.86" y="524.45" width="27.62" height="66.77" fill="#ff7f50"/><rect x="4092.86" y="591.22" width="27.62" height="78.28" fill="#5f9ea0"/><rect x="4120.48" y="541.59" width="27.62" height="70.86" fill="#ff7f50"/><rect x="4120.48" y="612.45" width="27.62" height="57.05" fill="#5f9ea0"/><rect x="4148.10" y="516.52" width="27.62" height="71.12" fill="#ff7f50"/><rect x="4148.10" y="587.63" width="27.62" height="81.87" fill="#5f9ea0"/><rect x="4175.72" y="523.17" width="27.62" height="71.63" fill="#ff7f50"/><rect x="4175.72" y="594.80" width="27.62" height="74.70" fill="#5f9ea0"/><rect x="4203.34" y="546.70" width="27.62" height="66.00" fill="#ff7f50"/><rect x="4203.34" y="612.70" width="27.62" height="56.80" fill="#5f9ea0"/><rect x="4230.97" y="546.19" width="27.62" height="47.07" fill="#ff7f50"/><rect x="4230.97" y="593.26" width="27.62" height="76.24" fill="#5f9ea0"/><rect x="4258.59" y="570.24" width="27.62" height="28.14" fill="#ff7f50"/><rect x="4258.59" y="598.38" width="27.62" height="71.12" fill="#5f9ea0"/><rect x="4286.21" y="496.31" width="27.62" height="95.93" fill="#ff7f50"/><rect x="4286.21" y="592.24" width="27.62" height="77.26" fill="#5f9ea0"/><rect x="4313.83" y="541.33" width="27.62" height="39.65" fill="#ff7f50"/><rect x="4313.83" y="580.98" width="27.62" height="88.52" fill="#5f9ea0"/><rect x="4341.45" y="562.05" width="27.62" height="8.70" fill="#ff7f50"/><rect x="4341.45" y="570.75" width="27.62" height="98.75" fill="#5f9ea0"/><rect x="4369.07" y="492.21" width="27.62" height="93.89" fill="#ff7f50"/><rect x="4369.07" y="586.10" width="27.62" height="83.40" fill="#5f9ea0"/><rect x="4396.69" y="540.82" width="27.62" height="38.12" fill="#ff7f50"/><rect x="4396.69" y="578.94" width="27.62" height="90.56" fill="#5f9ea0"/><rect x="4424.31" y="555.66" width="27.62" height="47.84" fill="#ff7f50"/><rect x="4424.31" y="603.49" width="27.62" height="66.01" fill="#5f9ea0"/><rect x="4451.93" y="524.45" width="27.62" height="94.91" fill="#ff7f50"/><rect x="4451.93" y="619.36" width="27.62" height="50.14" fill="#5f9ea0"/><rect x="4479.55" y="561.28" width="27.62" height="19.19" fill="#ff7f50"/><rect x="4479.55" y="580.47" width="27.62" height="89.03" fill="#5f9ea0"/><rect x="4507.17" y="572.28" width="27.62" height="8.19" fill="#ff7f50"/><rect x="4507.17" y="580.47" width="27.62" height="89.03" fill="#5f9ea0"/><rect x="4534.79" y="495.03" width="27.62" height="96.19" fill="#ff7f50"/><rect x="4534.79" y="591.22" width="27.62" height="78.28" fill="#5f9ea0"/><rect x="4562.41" y="586.35" width="27.62" height="19.19" fill="#ff7f50"/><rect x="4562.41" y="605.54" width="27.62" height="63.96" fill="#5f9ea0"/><rect x="4590.03" y="572.28" width="27.62" height="23.54" fill="#ff7f50"/><rect x="4590.03" y="595.82" width="27.62" height="73.68" fill="#5f9ea0"/><rect x="4617.66" y="542.61" width="27.62" height="28.40" fill="#ff7f50"/><rect x="4617.66" y="571.01" width="27.62" height="98.49" fill="#5f9ea0"/><rect x="4645.28" y="475.07" width="27.62" height="96.96" fill="#ff7f50"/><rect x="4645.28" y="572.03" width="27.62" height="97.47" fill="#5f9ea0"/><rect x="4672.90" y="547.21" width="27.62" height="18.42" fill="#ff7f50"/><rect x="4672.90" y="565.63" width="27.62" height="103.87" fill="#5f9ea0"/><rect x="4700.52" y="504.49" width="27.62" height="49.12" fill="#ff7f50"/><rect x="4700.52" y="553.61" width="27.62" height="115.89" fill="#5f9ea0"/><rect x="4728.14" y="509.86" width="27.62" height="80.07" fill="#ff7f50"/><rect x="4728.14" y="589.94" width="27.62" height="79.56" fill="#5f9ea0"/><rect x="4755.76" y="532.38" width="27.62" height="37.86" fill="#ff7f50"/><rect x="4755.76" y="570.24" width="27.62" height="99.26" fill="#5f9ea0"/><rect x="4783.38" y="614.49" width="27.62" height="55.01" fill="#5f9ea0"/><rect x="832.62" y="612.96" width="2" height="56.54" fill="rgba(255,255,255,0.55)" /><rect x="860.24" y="511.40" width="2" height="158.10" fill="rgba(255,255,255,0.55)" /><rect x="887.86" y="470.47" width="2" height="199.03" fill="rgba(255,255,255,0.55)" /><rect x="915.48" y="470.47" width="2" height="199.03" fill="rgba(255,255,255,0.55)" /><rect x="943.10" y="459.47" width="2" height="210.03" fill="rgba(255,255,255,0.55)" /><rect x="970.72" y="497.33" width="2" height="172.17" fill="rgba(255,255,255,0.55)" /><rect x="998.34" y="497.33" width="2" height="172.17" fill="rgba(255,255,255,0.55)" /><rect x="1025.97" y="450.77" width="2" height="218.73" fill="rgba(255,255,255,0.55)" /><rect x="1053.59" y="450.77" width="2" height="218.73" fill="rgba(255,255,255,0.55)" /><rect x="1081.21" y="442.33" width="2" height="227.17" fill="rgba(255,255,255,0.55)" /><rect x="1108.83" y="450.51" width="2" height="218.99" fill="rgba(255,255,255,0.55)" /><rect x="1136.45" y="506.54" width="2" height="162.96" fill="rgba(255,255,255,0.55)" /><rect x="1164.07" y="506.54" width="2" height="162.96" fill="rgba(255,255,255,0.55)" /><rect x="1191.69" y="485.56" width="2" height="183.94" fill="rgba(255,255,255,0.55)" /><rect x="1219.31" y="485.56" width="2" height="183.94" fill="rgba(255,255,255,0.55)" /><rect x="1246.93" y="498.35" width="2" height="171.15" fill="rgba(255,255,255,0.55)" /><rect x="1274.55" y="498.35" width="2" height="171.15" fill="rgba(255,255,255,0.55)" /><rect x="1302.17" y="479.17" width="2" height="190.33" fill="rgba(255,255,255,0.55)" /><rect x="1329.79" y="487.86" width="2" height="181.64" fill="rgba(255,255,255,0.55)" /><rect x="1357.41" y="487.86" width="2" height="181.64" fill="rgba(255,255,255,0.55)" /><rect x="1385.03" y="438.49" width="2" height="231.01" fill="rgba(255,255,255,0.55)" /><rect x="1412.66" y="464.58" width="2" height="204.92" fill="rgba(255,255,255,0.55)" /><rect x="1440.28" y="487.35" width="2" height="182.15" fill="rgba(255,255,255,0.55)" /><rect x="1467.90" y="487.35" width="2" height="182.15" fill="rgba(255,255,255,0.55)" /><rect x="1495.52" y="464.33" width="2" height="205.17" fill="rgba(255,255,255,0.55)" /><rect x="1523.14" y="464.33" width="2" height="205.17" fill="rgba(255,255,255,0.55)" /><rect x="1550.76" y="449.49" width="2" height="220.01" fill="rgba(255,255,255,0.55)" /><rect x="1578.38" y="440.79" width="2" height="228.71" fill="rgba(255,255,255,0.55)" /><rect x="1606.00" y="402.16" width="2" height="267.34" fill="rgba(255,255,255,0.55)" /><rect x="1633.62" y="454.35" width="2" height="215.15" fill="rgba(255,255,255,0.55)" /><rect x="1661.24" y="454.35" width="2" height="215.15" fill="rgba(255,255,255,0.55)" /><rect x="1688.86" y="488.12" width="2" height="181.38" fill="rgba(255,255,255,0.55)" /><rect x="1716.48" y="488.12" width="2" height="181.38" fill="rgba(255,255,255,0.55)" /><rect x="1744.10" y="461.51" width="2" height="207.99" fill="rgba(255,255,255,0.55)" /><rect x="1771.72" y="459.21" width="2" height="210.29" fill="rgba(255,255,255,0.55)" /><rect x="1799.34" y="519.07" width="2" height="150.43" fill="rgba(255,255,255,0.55)" /><rect x="1826.97" y="519.07" width="2" height="150.43" fill="rgba(255,255,255,0.55)" /><rect x="1854.59" y="484.28" width="2" height="185.22" fill="rgba(255,255,255,0.55)" /><rect x="1882.21" y="490.17" width="2" height="179.33" fill="rgba(255,255,255,0.55)" /><rect x="1909.83" y="496.31" width="2" height="173.19" fill="rgba(255,255,255,0.55)" /><rect x="1937.45" y="496.31" width="2" height="173.19" fill="rgba(255,255,255,0.55)" /><rect x="1965.07" y="454.61" width="2" height="214.89" fill="rgba(255,255,255,0.55)" /><rect x="1992.69" y="454.61" width="2" height="214.89" fill="rgba(255,255,255,0.55)" /><rect x="2020.31" y="522.14" width="2" height="147.36" fill="rgba(255,255,255,0.55)" /><rect x="2047.93" y="522.14" width="2" height="147.36" fill="rgba(255,255,255,0.55)" /><rect x="2075.55" y="490.42" width="2" height="179.08" fill="rgba(255,255,255,0.55)" /><rect x="2103.17" y="513.19" width="2" height="156.31" fill="rgba(255,255,255,0.55)" /><rect x="2130.79" y="513.19" width="2" height="156.31" fill="rgba(255,255,255,0.55)" /><rect x="2158.41" y="515.49" width="2" height="154.01" fill="rgba(255,255,255,0.55)" /><rect x="2186.03" y="515.49" width="2" height="154.01" fill="rgba(255,255,255,0.55)" /><rect x="2213.66" y="495.28" width="2" height="174.22" fill="rgba(255,255,255,0.55)" /><rect x="2241.28" y="517.03" width="2" height="152.47" fill="rgba(255,255,255,0.55)" /><rect x="2268.90" y="538.26" width="2" height="131.24" fill="rgba(255,255,255,0.55)" /><rect x="2296.52" y="547.73" width="2" height="121.77" fill="rgba(255,255,255,0.55)" /><rect x="2324.14" y="547.73" width="2" height="121.77" fill="rgba(255,255,255,0.55)" /><rect x="2351.76" y="492.47" width="2" height="177.03" fill="rgba(255,255,255,0.55)" /><rect x="2379.38" y="526.24" width="2" height="143.26" fill="rgba(255,255,255,0.55)" /><rect x="2407.00" y="536.47" width="2" height="133.03" fill="rgba(255,255,255,0.55)" /><rect x="2434.62" y="536.47" width="2" height="133.03" fill="rgba(255,255,255,0.55)" /><rect x="2462.24" y="536.21" width="2" height="133.29" fill="rgba(255,255,255,0.55)" /><rect x="2489.86" y="585.59" width="2" height="83.91" fill="rgba(255,255,255,0.55)" /><rect x="2517.48" y="585.59" width="2" height="83.91" fill="rgba(255,255,255,0.55)" /><rect x="2545.10" y="544.14" width="2" height="125.36" fill="rgba(255,255,255,0.55)" /><rect x="2572.72" y="514.72" width="2" height="154.78" fill="rgba(255,255,255,0.55)" /><rect x="2600.34" y="554.89" width="2" height="114.61" fill="rgba(255,255,255,0.55)" /><rect x="2627.97" y="554.89" width="2" height="114.61" fill="rgba(255,255,255,0.55)" /><rect x="2655.59" y="530.59" width="2" height="138.91" fill="rgba(255,255,255,0.55)" /><rect x="2683.21" y="558.73" width="2" height="110.77" fill="rgba(255,255,255,0.55)" /><rect x="2710.83" y="589.42" width="2" height="80.08" fill="rgba(255,255,255,0.55)" /><rect x="2738.45" y="589.42" width="2" height="80.08" fill="rgba(255,255,255,0.55)" /><rect x="2766.07" y="544.14" width="2" height="125.36" fill="rgba(255,255,255,0.55)" /><rect x="2793.69" y="544.14" width="2" height="125.36" fill="rgba(255,255,255,0.55)" /><rect x="2821.31" y="523.17" width="2" height="146.33" fill="rgba(255,255,255,0.55)" /><rect x="2848.93" y="524.19" width="2" height="145.31" fill="rgba(255,255,255,0.55)" /><rect x="2876.55" y="524.19" width="2" height="145.31" fill="rgba(255,255,255,0.55)" /><rect x="2904.17" y="516.26" width="2" height="153.24" fill="rgba(255,255,255,0.55)" /><rect x="2931.79" y="560.01" width="2" height="109.49" fill="rgba(255,255,255,0.55)" /><rect x="2959.41" y="560.01" width="2" height="109.49" fill="rgba(255,255,255,0.55)" /><rect x="2987.03" y="509.35" width="2" height="160.15" fill="rgba(255,255,255,0.55)" /><rect x="3014.66" y="472.26" width="2" height="197.24" fill="rgba(255,255,255,0.55)" /><rect x="3042.28" y="472.26" width="2" height="197.24" fill="rgba(255,255,255,0.55)" /><rect x="3069.90" y="524.19" width="2" height="145.31" fill="rgba(255,255,255,0.55)" /><rect x="3097.52" y="524.19" width="2" height="145.31" fill="rgba(255,255,255,0.55)" /><rect x="3125.14" y="512.17" width="2" height="157.33" fill="rgba(255,255,255,0.55)" /><rect x="3152.76" y="495.03" width="2" height="174.47" fill="rgba(255,255,255,0.55)" /><rect x="3180.38" y="500.40" width="2" height="169.10" fill="rgba(255,255,255,0.55)" /><rect x="3208.00" y="500.40" width="2" height="169.10" fill="rgba(255,255,255,0.55)" /><rect x="3235.62" y="498.35" width="2" height="171.15" fill="rgba(255,255,255,0.55)" /><rect x="3263.24" y="498.35" width="2" height="171.15" fill="rgba(255,255,255,0.55)" /><rect x="3290.86" y="487.86" width="2" height="181.64" fill="rgba(255,255,255,0.55)" /><rect x="3318.48" y="523.42" width="2" height="146.08" fill="rgba(255,255,255,0.55)" /><rect x="3346.10" y="523.42" width="2" height="146.08" fill="rgba(255,255,255,0.55)" /><rect x="3373.72" y="550.28" width="2" height="119.22" fill="rgba(255,255,255,0.55)" /><rect x="3401.34" y="550.28" width="2" height="119.22" fill="rgba(255,255,255,0.55)" /><rect x="3428.97" y="512.68" width="2" height="156.82" fill="rgba(255,255,255,0.55)" /><rect x="3456.59" y="503.72" width="2" height="165.78" fill="rgba(255,255,255,0.55)" /><rect x="3484.21" y="526.24" width="2" height="143.26" fill="rgba(255,255,255,0.55)" /><rect x="3511.83" y="530.59" width="2" height="138.91" fill="rgba(255,255,255,0.55)" /><rect x="3539.45" y="552.84" width="2" height="116.66" fill="rgba(255,255,255,0.55)" /><rect x="3567.07" y="554.38" width="2" height="115.12" fill="rgba(255,255,255,0.55)" /><rect x="3594.69" y="574.84" width="2" height="94.66" fill="rgba(255,255,255,0.55)" /><rect x="3622.31" y="574.84" width="2" height="94.66" fill="rgba(255,255,255,0.55)" /><rect x="3649.93" y="590.19" width="2" height="79.31" fill="rgba(255,255,255,0.55)" /><rect x="3677.55" y="590.19" width="2" height="79.31" fill="rgba(255,255,255,0.55)" /><rect x="3705.17" y="556.42" width="2" height="113.08" fill="rgba(255,255,255,0.55)" /><rect x="3732.79" y="556.42" width="2" height="113.08" fill="rgba(255,255,255,0.55)" /><rect x="3760.41" y="553.10" width="2" height="116.40" fill="rgba(255,255,255,0.55)" /><rect x="3788.03" y="534.68" width="2" height="134.82" fill="rgba(255,255,255,0.55)" /><rect x="3815.66" y="576.63" width="2" height="92.87" fill="rgba(255,255,255,0.55)" /><rect x="3843.28" y="600.94" width="2" height="68.56" fill="rgba(255,255,255,0.55)" /><rect x="3870.90" y="600.94" width="2" height="68.56" fill="rgba(255,255,255,0.55)" /><rect x="3898.52" y="503.72" width="2" height="165.78" fill="rgba(255,255,255,0.55)" /><rect x="3926.14" y="518.56" width="2" height="150.94" fill="rgba(255,255,255,0.55)" /><rect x="3953.76" y="518.56" width="2" height="150.94" fill="rgba(255,255,255,0.55)" /><rect x="3981.38" y="522.14" width="2" height="147.36" fill="rgba(255,255,255,0.55)" /><rect x="4009.00" y="564.61" width="2" height="104.89" fill="rgba(255,255,255,0.55)" /><rect x="4036.62" y="564.61" width="2" height="104.89" fill="rgba(255,255,255,0.55)" /><rect x="4064.24" y="544.66" width="2" height="124.84" fill="rgba(255,255,255,0.55)" /><rect x="4091.86" y="544.66" width="2" height="124.84" fill="rgba(255,255,255,0.55)" /><rect x="4119.48" y="541.59" width="2" height="127.91" fill="rgba(255,255,255,0.55)" /><rect x="4147.10" y="541.59" width="2" height="127.91" fill="rgba(255,255,255,0.55)" /><rect x="4174.72" y="523.17" width="2" height="146.33" fill="rgba(255,255,255,0.55)" /><rect x="4202.34" y="546.70" width="2" height="122.80" fill="rgba(255,255,255,0.55)" /><rect x="4229.97" y="546.70" width="2" height="122.80" fill="rgba(255,255,255,0.55)" /><rect x="4257.59" y="570.24" width="2" height="99.26" fill="rgba(255,255,255,0.55)" /><rect x="4285.21" y="570.24" width="2" height="99.26" fill="rgba(255,255,255,0.55)" /><rect x="4312.83" y="541.33" width="2" height="128.17" fill="rgba(255,255,255,0.55)" /><rect x="4340.45" y="562.05" width="2" height="107.45" fill="rgba(255,255,255,0.55)" /><rect x="4368.07" y="562.05" width="2" height="107.45" fill="rgba(255,255,255,0.55)" /><rect x="4395.69" y="540.82" width="2" height="128.68" fill="rgba(255,255,255,0.55)" /><rect x="4423.31" y="555.66" width="2" height="113.84" fill="rgba(255,255,255,0.55)" /><rect x="4450.93" y="555.66" width="2" height="113.84" fill="rgba(255,255,255,0.55)" /><rect x="4478.55" y="561.28" width="2" height="108.22" fill="rgba(255,255,255,0.55)" /><rect x="4506.17" y="572.28" width="2" height="97.22" fill="rgba(255,255,255,0.55)" /><rect x="4533.79" y="572.28" width="2" height="97.22" fill="rgba(255,255,255,0.55)" /><rect x="4561.41" y="586.35" width="2" height="83.15" fill="rgba(255,255,255,0.55)" /><rect x="4589.03" y="586.35" width="2" height="83.15" fill="rgba(255,255,255,0.55)" /><rect x="4616.66" y="572.28" width="2" height="97.22" fill="rgba(255,255,255,0.55)" /><rect x="4644.28" y="542.61" width="2" height="126.89" fill="rgba(255,255,255,0.55)" /><rect x="4671.90" y="547.21" width="2" height="122.29" fill="rgba(255,255,255,0.55)" /><rect x="4699.52" y="547.21" width="2" height="122.29" fill="rgba(255,255,255,0.55)" /><rect x="4727.14" y="509.86" width="2" height="159.64" fill="rgba(255,255,255,0.55)" /><rect x="4754.76" y="532.38" width="2" height="137.12" fill="rgba(255,255,255,0.55)" /><rect x="4782.38" y="614.49" width="2" height="55.01" fill="rgba(255,255,255,0.55)" /><rect x="818.5" y="669.5" width="2.2" height="11" fill="#777"/><rect x="1315.8" y="669.5" width="2.2" height="11" fill="#777"/><rect x="1813.2" y="669.5" width="2.2" height="11" fill="#777"/><rect x="2310.5" y="669.5" width="2.2" height="11" fill="#777"/><rect x="2807.8" y="669.5" width="2.2" height="11" fill="#777"/><rect x="3305.2" y="669.5" width="2.2" height="11" fill="#777"/><rect x="3802.5" y="669.5" width="2.2" height="11" fill="#777"/><rect x="4797.0" y="669.5" width="2.2" height="11" fill="#777"/></svg>
<div style="position:absolute;left:-2201px;width:3000px;text-align:right;top:343.8px;font-size:20px;line-height:20px;color:#222;font-weight:400;white-space:nowrap;">800K</div>
<div style="position:absolute;left:-2201px;width:3000px;text-align:right;top:410.4px;font-size:20px;line-height:20px;color:#222;font-weight:400;white-space:nowrap;">600K</div>
<div style="position:absolute;left:-2201px;width:3000px;text-align:right;top:493.4px;font-size:20px;line-height:20px;color:#222;font-weight:400;white-space:nowrap;">400K</div>
<div style="position:absolute;left:-2201px;width:3000px;text-align:right;top:576.0px;font-size:20px;line-height:20px;color:#222;font-weight:400;white-space:nowrap;">200K</div>
<div style="position:absolute;left:-2201px;width:3000px;text-align:right;top:659.4px;font-size:20px;line-height:20px;color:#222;font-weight:400;white-space:nowrap;">0</div>
<div style="position:absolute;left:613.7px;top:489.3px;width:200px;height:30px;line-height:30px;text-align:center;font-size:24px;font-weight:700;color:#111;transform:rotate(-90deg)">Duration</div>
<div style="position:absolute;left:-680.5px;width:3000px;text-align:center;top:681.1px;font-size:20px;line-height:20px;color:#555;font-weight:400;white-space:nowrap;">2023-10-10 08:50 AM</div>
<div style="position:absolute;left:-183.17000000000007px;width:3000px;text-align:center;top:681.1px;font-size:20px;line-height:20px;color:#555;font-weight:400;white-space:nowrap;">2023-10-10 11:50 AM</div>
<div style="position:absolute;left:314.15999999999985px;width:3000px;text-align:center;top:681.1px;font-size:20px;line-height:20px;color:#555;font-weight:400;white-space:nowrap;">2023-10-10 02:50 PM</div>
<div style="position:absolute;left:811.4899999999998px;width:3000px;text-align:center;top:681.1px;font-size:20px;line-height:20px;color:#555;font-weight:400;white-space:nowrap;">2023-10-10 05:50 PM</div>
<div style="position:absolute;left:1308.8199999999997px;width:3000px;text-align:center;top:681.1px;font-size:20px;line-height:20px;color:#555;font-weight:400;white-space:nowrap;">2023-10-10 08:50 PM</div>
<div style="position:absolute;left:1806.15px;width:3000px;text-align:center;top:681.1px;font-size:20px;line-height:20px;color:#555;font-weight:400;white-space:nowrap;">2023-10-10 11:50 PM</div>
<div style="position:absolute;left:2303.48px;width:3000px;text-align:center;top:681.1px;font-size:20px;line-height:20px;color:#555;font-weight:400;white-space:nowrap;">2023-10-11 02:50 AM</div>
<div style="position:absolute;left:1792px;width:3000px;text-align:right;top:681.1px;font-size:20px;line-height:20px;color:#555;font-weight:400;white-space:nowrap;">2023-10-11 08:50 AM</div>
<div style="position:absolute;left:4824px;top:352.5px;width:199.5px;height:59.0px;background:#b8dff7;border-radius:9px"></div>
<div style="position:absolute;left:4836.4px;top:366.8px;font-size:25px;line-height:25px;color:#222;font-weight:400;white-space:nowrap;letter-spacing:0.35px;-webkit-text-stroke:0.45px #222;">Queries</div>
<svg style="position:absolute;left:4975px;top:366px;" width="25" height="28" viewBox="4975 366 25 28"><polyline points="4982,373 4993,382.5 4982,392" fill="none" stroke="#222" stroke-width="3.4"/></svg>
<div style="position:absolute;left:4836.4px;top:426.8px;font-size:25px;line-height:25px;color:#222;font-weight:400;white-space:nowrap;letter-spacing:0.35px;-webkit-text-stroke:0.45px #222;">By App</div>
<svg style="position:absolute;left:4975px;top:426px;" width="25" height="28" viewBox="4975 426 25 28"><polyline points="4982,433 4993,442.5 4982,452" fill="none" stroke="#222" stroke-width="3.4"/></svg>
<div style="position:absolute;left:4836.4px;top:486.8px;font-size:25px;line-height:25px;color:#222;font-weight:400;white-space:nowrap;letter-spacing:0.35px;-webkit-text-stroke:0.45px #222;">By DB</div>
<svg style="position:absolute;left:4975px;top:486px;" width="25" height="28" viewBox="4975 486 25 28"><polyline points="4982,493 4993,502.5 4982,512" fill="none" stroke="#222" stroke-width="3.4"/></svg>
<div style="position:absolute;left:4836.4px;top:546.8px;font-size:25px;line-height:25px;color:#222;font-weight:400;white-space:nowrap;letter-spacing:0.35px;-webkit-text-stroke:0.45px #222;">By Host</div>
<svg style="position:absolute;left:4975px;top:546px;" width="25" height="28" viewBox="4975 546 25 28"><polyline points="4982,553 4993,562.5 4982,572" fill="none" stroke="#222" stroke-width="3.4"/></svg>
<div style="position:absolute;left:4836.4px;top:606.8px;font-size:25px;line-height:25px;color:#222;font-weight:400;white-space:nowrap;letter-spacing:0.35px;-webkit-text-stroke:0.45px #222;">By Login</div>
<svg style="position:absolute;left:4975px;top:606px;" width="25" height="28" viewBox="4975 606 25 28"><polyline points="4982,613 4993,622.5 4982,632" fill="none" stroke="#222" stroke-width="3.4"/></svg>
<div style="position:absolute;left:4836.4px;top:666.8px;font-size:25px;line-height:25px;color:#222;font-weight:400;white-space:nowrap;letter-spacing:0.35px;-webkit-text-stroke:0.45px #222;">Resources</div>
<div style="position:absolute;left:676px;top:801px;width:4359px;height:1359px;background:#fff;border-radius:6px;box-shadow:0 1.5px 1.5px rgba(0,0,0,0.34), 0 0 2.5px rgba(0,0,0,0.12);"></div>
<div style="position:absolute;left:676px;top:801px;width:4359px;height:83px;background:#f4f4f4;border-radius:6px 6px 0 0"></div>
<div style="position:absolute;left:676px;top:880px;width:500px;height:4px;background:#0897ea"></div>
<div style="position:absolute;left:737px;top:825.2px;font-size:32px;line-height:32px;color:#0897ea;font-weight:400;white-space:nowrap;letter-spacing:1.70px;-webkit-text-stroke:1.3px #0897ea;">COMPLETED QUERIES</div>
<div style="position:absolute;left:1237.6px;top:825.2px;font-size:32px;line-height:32px;color:#666;font-weight:400;white-space:nowrap;letter-spacing:1.76px;-webkit-text-stroke:1.3px #666;">PROC/QUERY STATS</div>
<div style="position:absolute;left:697px;top:932px;width:74px;height:27.5px;background:#9e9e9e;border-radius:14px"></div>
<svg style="position:absolute;left:690px;top:920px;" width="55" height="55" viewBox="690 920 55 55"><circle cx="716.3" cy="947" r="19.5" fill="#fafafa" style="filter:drop-shadow(0 1.5px 1.5px rgba(0,0,0,0.35))"/></svg>
<div style="position:absolute;left:829px;top:926.7px;font-size:32px;line-height:32px;color:#666;font-weight:400;white-space:nowrap;letter-spacing:2.60px;-webkit-text-stroke:1.05px #666;">Totals</div>
<div style="position:absolute;left:676px;top:1001.5px;width:4359px;height:2.0px;background:#e3e6ea"></div>
<div style="position:absolute;left:676px;top:1003.5px;width:4359px;height:102.5px;background:#f8f9fa"></div>
<div style="position:absolute;left:676px;top:1106px;width:4359px;height:2px;background:#e3e6ea"></div>
<div style="position:absolute;left:690px;top:1018px;width:144px;height:74px;background:#9ea3ec;border-radius:12px"></div>
<svg style="position:absolute;left:708px;top:1038px;" width="37" height="34" viewBox="708 1038 37 34"><path d="M714,1045 L738,1045 L729,1056 L729,1068 L723,1068 L723,1056 Z" fill="none" stroke="#fff" stroke-width="2.6" stroke-linejoin="round"/><path d="M716,1043 L737,1067" stroke="#9ea3ec" stroke-width="5"/><path d="M716,1043 L737,1067" stroke="#fff" stroke-width="2.4"/></svg>
<div style="position:absolute;left:751.4px;top:1043.7px;font-size:24px;line-height:24px;color:#fff;font-weight:400;white-space:nowrap;letter-spacing:0.60px;-webkit-text-stroke:0.95px #fff;">Clear</div>
<div style="position:absolute;left:4636px;top:1018.5px;width:385px;height:73.0px;box-sizing:border-box;background:#fff;border:2px solid #d5d9de;border-radius:13px"></div>
<svg style="position:absolute;left:4650px;top:1036px;" width="38" height="36" viewBox="4650 1036 38 36"><circle cx="4666" cy="1052.5" r="9.5" fill="none" stroke="#6b7280" stroke-width="2.6"/><path d="M4673,1059.5 L4680,1066.5" stroke="#6b7280" stroke-width="2.8"/></svg>
<div style="position:absolute;left:4707.3px;top:1043.7px;font-size:24px;line-height:24px;color:#6b7280;font-weight:400;white-space:nowrap;">Search</div>
<div style="position:absolute;left:676px;top:1108px;width:4359px;height:173px;background:#f4f4f4"></div>
<div style="position:absolute;left:2890px;top:1108px;width:166px;height:173px;background:#eef0fb"></div>
<div style="position:absolute;left:676px;top:1281px;width:4359px;height:2px;background:#e3e6ea"></div>
<div style="position:absolute;left:690.7px;top:1179.6px;font-size:27px;line-height:27px;color:#1a1a1a;font-weight:400;white-space:nowrap;letter-spacing:0.08px;-webkit-text-stroke:0.65px #1a1a1a;">Events</div>
<div style="position:absolute;left:847px;top:1179.6px;font-size:27px;line-height:27px;color:#1a1a1a;font-weight:400;white-space:nowrap;letter-spacing:0.08px;-webkit-text-stroke:0.65px #1a1a1a;">Text Data</div>
<div style="position:absolute;left:1923px;top:1179.6px;font-size:27px;line-height:27px;color:#1a1a1a;font-weight:400;white-space:nowrap;letter-spacing:0.08px;-webkit-text-stroke:0.65px #1a1a1a;">Database</div>
<div style="position:absolute;left:2178.5px;top:1161.6px;font-size:27px;line-height:27px;color:#1a1a1a;font-weight:400;white-space:nowrap;letter-spacing:0.08px;-webkit-text-stroke:0.65px #1a1a1a;">Total</div>
<div style="position:absolute;left:2178.5px;top:1197.6px;font-size:27px;line-height:27px;color:#1a1a1a;font-weight:400;white-space:nowrap;letter-spacing:0.08px;-webkit-text-stroke:0.65px #1a1a1a;">Duration</div>
<div style="position:absolute;left:2402.7px;top:1161.6px;font-size:27px;line-height:27px;color:#1a1a1a;font-weight:400;white-space:nowrap;letter-spacing:0.08px;-webkit-text-stroke:0.65px #1a1a1a;">Avg</div>
<div style="position:absolute;left:2402.7px;top:1197.6px;font-size:27px;line-height:27px;color:#1a1a1a;font-weight:400;white-space:nowrap;letter-spacing:0.08px;-webkit-text-stroke:0.65px #1a1a1a;">Duration</div>
<div style="position:absolute;left:2590px;top:1161.6px;font-size:27px;line-height:27px;color:#1a1a1a;font-weight:400;white-space:nowrap;letter-spacing:0.08px;-webkit-text-stroke:0.65px #1a1a1a;">%</div>
<div style="position:absolute;left:2590px;top:1197.6px;font-size:27px;line-height:27px;color:#1a1a1a;font-weight:400;white-space:nowrap;letter-spacing:0.08px;-webkit-text-stroke:0.65px #1a1a1a;">Change</div>
<div style="position:absolute;left:2762px;top:1161.6px;font-size:27px;line-height:27px;color:#1a1a1a;font-weight:400;white-space:nowrap;letter-spacing:0.08px;-webkit-text-stroke:0.65px #1a1a1a;">CPU</div>
<div style="position:absolute;left:2762px;top:1197.6px;font-size:27px;line-height:27px;color:#1a1a1a;font-weight:400;white-space:nowrap;letter-spacing:0.08px;-webkit-text-stroke:0.65px #1a1a1a;">(ms)</div>
<div style="position:absolute;left:2906px;top:1161.6px;font-size:27px;line-height:27px;color:#4338c8;font-weight:400;white-space:nowrap;letter-spacing:0.08px;-webkit-text-stroke:0.65px #4338c8;">Reads</div>
<div style="position:absolute;left:2906px;top:1197.6px;font-size:27px;line-height:27px;color:#4338c8;font-weight:400;white-space:nowrap;letter-spacing:0.08px;-webkit-text-stroke:0.65px #4338c8;">(L)</div>
<div style="position:absolute;left:3071px;top:1161.6px;font-size:27px;line-height:27px;color:#1a1a1a;font-weight:400;white-space:nowrap;letter-spacing:0.08px;-webkit-text-stroke:0.65px #1a1a1a;">Writes</div>
<div style="position:absolute;left:3071px;top:1197.6px;font-size:27px;line-height:27px;color:#1a1a1a;font-weight:400;white-space:nowrap;letter-spacing:0.08px;-webkit-text-stroke:0.65px #1a1a1a;">(L)</div>
<div style="position:absolute;left:3228.4px;top:1161.6px;font-size:27px;line-height:27px;color:#1a1a1a;font-weight:400;white-space:nowrap;letter-spacing:0.08px;-webkit-text-stroke:0.65px #1a1a1a;">Waits</div>
<div style="position:absolute;left:3228.4px;top:1197.6px;font-size:27px;line-height:27px;color:#1a1a1a;font-weight:400;white-space:nowrap;letter-spacing:0.08px;-webkit-text-stroke:0.65px #1a1a1a;">(ms)</div>
<div style="position:absolute;left:3403px;top:1143.6px;font-size:27px;line-height:27px;color:#1a1a1a;font-weight:400;white-space:nowrap;letter-spacing:0.08px;-webkit-text-stroke:0.65px #1a1a1a;">Granted</div>
<div style="position:absolute;left:3403px;top:1179.6px;font-size:27px;line-height:27px;color:#1a1a1a;font-weight:400;white-space:nowrap;letter-spacing:0.08px;-webkit-text-stroke:0.65px #1a1a1a;">Memory</div>
<div style="position:absolute;left:3403px;top:1215.6px;font-size:27px;line-height:27px;color:#1a1a1a;font-weight:400;white-space:nowrap;letter-spacing:0.08px;-webkit-text-stroke:0.65px #1a1a1a;">(KB)</div>
<div style="position:absolute;left:3600.6px;top:1125.6px;font-size:27px;line-height:27px;color:#1a1a1a;font-weight:400;white-space:nowrap;letter-spacing:0.08px;-webkit-text-stroke:0.65px #1a1a1a;">Granted</div>
<div style="position:absolute;left:3600.6px;top:1161.6px;font-size:27px;line-height:27px;color:#1a1a1a;font-weight:400;white-space:nowrap;letter-spacing:0.08px;-webkit-text-stroke:0.65px #1a1a1a;">Query</div>
<div style="position:absolute;left:3600.6px;top:1197.6px;font-size:27px;line-height:27px;color:#1a1a1a;font-weight:400;white-space:nowrap;letter-spacing:0.08px;-webkit-text-stroke:0.65px #1a1a1a;">Memory</div>
<div style="position:absolute;left:3600.6px;top:1233.6px;font-size:27px;line-height:27px;color:#1a1a1a;font-weight:400;white-space:nowrap;letter-spacing:0.08px;-webkit-text-stroke:0.65px #1a1a1a;">(KB)</div>
<div style="position:absolute;left:3813px;top:1161.6px;font-size:27px;line-height:27px;color:#1a1a1a;font-weight:400;white-space:nowrap;letter-spacing:0.08px;-webkit-text-stroke:0.65px #1a1a1a;">Requested</div>
<div style="position:absolute;left:3813px;top:1197.6px;font-size:27px;line-height:27px;color:#1a1a1a;font-weight:400;white-space:nowrap;letter-spacing:0.08px;-webkit-text-stroke:0.65px #1a1a1a;">Memory (KB)</div>
<div style="position:absolute;left:4043.5px;top:1143.6px;font-size:27px;line-height:27px;color:#1a1a1a;font-weight:400;white-space:nowrap;letter-spacing:0.08px;-webkit-text-stroke:0.65px #1a1a1a;">Session</div>
<div style="position:absolute;left:4043.5px;top:1179.6px;font-size:27px;line-height:27px;color:#1a1a1a;font-weight:400;white-space:nowrap;letter-spacing:0.08px;-webkit-text-stroke:0.65px #1a1a1a;">Memory</div>
<div style="position:absolute;left:4043.5px;top:1215.6px;font-size:27px;line-height:27px;color:#1a1a1a;font-weight:400;white-space:nowrap;letter-spacing:0.08px;-webkit-text-stroke:0.65px #1a1a1a;">(KB)</div>
<div style="position:absolute;left:4242px;top:1143.6px;font-size:27px;line-height:27px;color:#1a1a1a;font-weight:400;white-space:nowrap;letter-spacing:0.08px;-webkit-text-stroke:0.65px #1a1a1a;">Tempdb</div>
<div style="position:absolute;left:4242px;top:1179.6px;font-size:27px;line-height:27px;color:#1a1a1a;font-weight:400;white-space:nowrap;letter-spacing:0.08px;-webkit-text-stroke:0.65px #1a1a1a;">Internal</div>
<div style="position:absolute;left:4242px;top:1215.6px;font-size:27px;line-height:27px;color:#1a1a1a;font-weight:400;white-space:nowrap;letter-spacing:0.08px;-webkit-text-stroke:0.65px #1a1a1a;">(KB)</div>
<div style="position:absolute;left:4438.6px;top:1125.6px;font-size:27px;line-height:27px;color:#1a1a1a;font-weight:400;white-space:nowrap;letter-spacing:0.08px;-webkit-text-stroke:0.65px #1a1a1a;">Tempdb</div>
<div style="position:absolute;left:4438.6px;top:1161.6px;font-size:27px;line-height:27px;color:#1a1a1a;font-weight:400;white-space:nowrap;letter-spacing:0.08px;-webkit-text-stroke:0.65px #1a1a1a;">Internal</div>
<div style="position:absolute;left:4438.6px;top:1197.6px;font-size:27px;line-height:27px;color:#1a1a1a;font-weight:400;white-space:nowrap;letter-spacing:0.08px;-webkit-text-stroke:0.65px #1a1a1a;">(KB)</div>
<div style="position:absolute;left:4438.6px;top:1233.6px;font-size:27px;line-height:27px;color:#1a1a1a;font-weight:400;white-space:nowrap;letter-spacing:0.08px;-webkit-text-stroke:0.65px #1a1a1a;">Dealloc</div>
<div style="position:absolute;left:4652.6px;top:1161.6px;font-size:27px;line-height:27px;color:#1a1a1a;font-weight:400;white-space:nowrap;letter-spacing:0.08px;-webkit-text-stroke:0.65px #1a1a1a;">Tempdb</div>
<div style="position:absolute;left:4652.6px;top:1197.6px;font-size:27px;line-height:27px;color:#1a1a1a;font-weight:400;white-space:nowrap;letter-spacing:0.08px;-webkit-text-stroke:0.65px #1a1a1a;">User (KB)</div>
<div style="position:absolute;left:4842.7px;top:1143.6px;font-size:27px;line-height:27px;color:#1a1a1a;font-weight:400;white-space:nowrap;letter-spacing:0.08px;-webkit-text-stroke:0.65px #1a1a1a;">Tempdb</div>
<div style="position:absolute;left:4842.7px;top:1179.6px;font-size:27px;line-height:27px;color:#1a1a1a;font-weight:400;white-space:nowrap;letter-spacing:0.08px;-webkit-text-stroke:0.65px #1a1a1a;">User (KB)</div>
<div style="position:absolute;left:4842.7px;top:1215.6px;font-size:27px;line-height:27px;color:#1a1a1a;font-weight:400;white-space:nowrap;letter-spacing:0.08px;-webkit-text-stroke:0.65px #1a1a1a;">Dealloc</div>
<svg style="position:absolute;left:680px;top:1150px;" width="4350" height="90" viewBox="680 1150 4350 90"><path d="M796.3,1205.6 L796.3,1181.1000000000001" stroke="#222" stroke-width="2.25" fill="none"/><path d="M790.6999999999999,1186.5 L796.3,1180.9 L801.9,1186.5" stroke="#222" stroke-width="2.25" fill="none"/><path d="M810.1999999999999,1179.9 L810.1999999999999,1204.3999999999999" stroke="#222" stroke-width="2.25" fill="none"/><path d="M804.9999999999999,1199.0 L810.1999999999999,1204.6 L815.4,1199.0" stroke="#222" stroke-width="2.25" fill="none"/><path d="M982.7,1205.6 L982.7,1181.1000000000001" stroke="#222" stroke-width="2.25" fill="none"/><path d="M977.1,1186.5 L982.7,1180.9 L988.3000000000001,1186.5" stroke="#222" stroke-width="2.25" fill="none"/><path d="M996.6,1179.9 L996.6,1204.3999999999999" stroke="#222" stroke-width="2.25" fill="none"/><path d="M991.4,1199.0 L996.6,1204.6 L1001.8000000000001,1199.0" stroke="#222" stroke-width="2.25" fill="none"/><path d="M2058.6,1205.6 L2058.6,1181.1000000000001" stroke="#222" stroke-width="2.25" fill="none"/><path d="M2053.0,1186.5 L2058.6,1180.9 L2064.2,1186.5" stroke="#222" stroke-width="2.25" fill="none"/><path d="M2072.5,1179.9 L2072.5,1204.3999999999999" stroke="#222" stroke-width="2.25" fill="none"/><path d="M2067.3,1199.0 L2072.5,1204.6 L2077.7,1199.0" stroke="#222" stroke-width="2.25" fill="none"/><path d="M2354.0,1205.6 L2354.0,1181.1000000000001" stroke="#222" stroke-width="2.25" fill="none"/><path d="M2348.4,1186.5 L2354.0,1180.9 L2359.6,1186.5" stroke="#222" stroke-width="2.25" fill="none"/><path d="M2367.9,1179.9 L2367.9,1204.3999999999999" stroke="#222" stroke-width="2.25" fill="none"/><path d="M2362.7000000000003,1199.0 L2367.9,1204.6 L2373.1,1199.0" stroke="#222" stroke-width="2.25" fill="none"/><path d="M2543.0,1205.6 L2543.0,1181.1000000000001" stroke="#222" stroke-width="2.25" fill="none"/><path d="M2537.4,1186.5 L2543.0,1180.9 L2548.6,1186.5" stroke="#222" stroke-width="2.25" fill="none"/><path d="M2556.9,1179.9 L2556.9,1204.3999999999999" stroke="#222" stroke-width="2.25" fill="none"/><path d="M2551.7000000000003,1199.0 L2556.9,1204.6 L2562.1,1199.0" stroke="#222" stroke-width="2.25" fill="none"/><path d="M2713.7,1205.6 L2713.7,1181.1000000000001" stroke="#222" stroke-width="2.25" fill="none"/><path d="M2708.1,1186.5 L2713.7,1180.9 L2719.2999999999997,1186.5" stroke="#222" stroke-width="2.25" fill="none"/><path d="M2727.6,1179.9 L2727.6,1204.3999999999999" stroke="#222" stroke-width="2.25" fill="none"/><path d="M2722.4,1199.0 L2727.6,1204.6 L2732.7999999999997,1199.0" stroke="#222" stroke-width="2.25" fill="none"/><path d="M2857.8,1205.6 L2857.8,1181.1000000000001" stroke="#222" stroke-width="2.25" fill="none"/><path d="M2852.2000000000003,1186.5 L2857.8,1180.9 L2863.4,1186.5" stroke="#222" stroke-width="2.25" fill="none"/><path d="M2871.7000000000003,1179.9 L2871.7000000000003,1204.3999999999999" stroke="#222" stroke-width="2.25" fill="none"/><path d="M2866.5000000000005,1199.0 L2871.7000000000003,1204.6 L2876.9,1199.0" stroke="#222" stroke-width="2.25" fill="none"/><path d="M3180.0,1205.6 L3180.0,1181.1000000000001" stroke="#222" stroke-width="2.25" fill="none"/><path d="M3174.4,1186.5 L3180.0,1180.9 L3185.6,1186.5" stroke="#222" stroke-width="2.25" fill="none"/><path d="M3193.9,1179.9 L3193.9,1204.3999999999999" stroke="#222" stroke-width="2.25" fill="none"/><path d="M3188.7000000000003,1199.0 L3193.9,1204.6 L3199.1,1199.0" stroke="#222" stroke-width="2.25" fill="none"/><path d="M3354.5,1205.6 L3354.5,1181.1000000000001" stroke="#222" stroke-width="2.25" fill="none"/><path d="M3348.9,1186.5 L3354.5,1180.9 L3360.1,1186.5" stroke="#222" stroke-width="2.25" fill="none"/><path d="M3368.4,1179.9 L3368.4,1204.3999999999999" stroke="#222" stroke-width="2.25" fill="none"/><path d="M3363.2000000000003,1199.0 L3368.4,1204.6 L3373.6,1199.0" stroke="#222" stroke-width="2.25" fill="none"/><path d="M3553.2,1205.6 L3553.2,1181.1000000000001" stroke="#222" stroke-width="2.25" fill="none"/><path d="M3547.6,1186.5 L3553.2,1180.9 L3558.7999999999997,1186.5" stroke="#222" stroke-width="2.25" fill="none"/><path d="M3567.1,1179.9 L3567.1,1204.3999999999999" stroke="#222" stroke-width="2.25" fill="none"/><path d="M3561.9,1199.0 L3567.1,1204.6 L3572.2999999999997,1199.0" stroke="#222" stroke-width="2.25" fill="none"/><path d="M3765.5,1205.6 L3765.5,1181.1000000000001" stroke="#222" stroke-width="2.25" fill="none"/><path d="M3759.9,1186.5 L3765.5,1180.9 L3771.1,1186.5" stroke="#222" stroke-width="2.25" fill="none"/><path d="M3779.4,1179.9 L3779.4,1204.3999999999999" stroke="#222" stroke-width="2.25" fill="none"/><path d="M3774.2000000000003,1199.0 L3779.4,1204.6 L3784.6,1199.0" stroke="#222" stroke-width="2.25" fill="none"/><path d="M3996.1,1205.6 L3996.1,1181.1000000000001" stroke="#222" stroke-width="2.25" fill="none"/><path d="M3990.5,1186.5 L3996.1,1180.9 L4001.7,1186.5" stroke="#222" stroke-width="2.25" fill="none"/><path d="M4010.0,1179.9 L4010.0,1204.3999999999999" stroke="#222" stroke-width="2.25" fill="none"/><path d="M4004.8,1199.0 L4010.0,1204.6 L4015.2,1199.0" stroke="#222" stroke-width="2.25" fill="none"/><path d="M4194.5,1205.6 L4194.5,1181.1000000000001" stroke="#222" stroke-width="2.25" fill="none"/><path d="M4188.9,1186.5 L4194.5,1180.9 L4200.1,1186.5" stroke="#222" stroke-width="2.25" fill="none"/><path d="M4208.4,1179.9 L4208.4,1204.3999999999999" stroke="#222" stroke-width="2.25" fill="none"/><path d="M4203.2,1199.0 L4208.4,1204.6 L4213.599999999999,1199.0" stroke="#222" stroke-width="2.25" fill="none"/><path d="M4391.2,1205.6 L4391.2,1181.1000000000001" stroke="#222" stroke-width="2.25" fill="none"/><path d="M4385.599999999999,1186.5 L4391.2,1180.9 L4396.8,1186.5" stroke="#222" stroke-width="2.25" fill="none"/><path d="M4405.099999999999,1179.9 L4405.099999999999,1204.3999999999999" stroke="#222" stroke-width="2.25" fill="none"/><path d="M4399.9,1199.0 L4405.099999999999,1204.6 L4410.299999999999,1199.0" stroke="#222" stroke-width="2.25" fill="none"/><path d="M4603.5,1205.6 L4603.5,1181.1000000000001" stroke="#222" stroke-width="2.25" fill="none"/><path d="M4597.9,1186.5 L4603.5,1180.9 L4609.1,1186.5" stroke="#222" stroke-width="2.25" fill="none"/><path d="M4617.4,1179.9 L4617.4,1204.3999999999999" stroke="#222" stroke-width="2.25" fill="none"/><path d="M4612.2,1199.0 L4617.4,1204.6 L4622.599999999999,1199.0" stroke="#222" stroke-width="2.25" fill="none"/><path d="M4795.8,1205.6 L4795.8,1181.1000000000001" stroke="#222" stroke-width="2.25" fill="none"/><path d="M4790.2,1186.5 L4795.8,1180.9 L4801.400000000001,1186.5" stroke="#222" stroke-width="2.25" fill="none"/><path d="M4809.7,1179.9 L4809.7,1204.3999999999999" stroke="#222" stroke-width="2.25" fill="none"/><path d="M4804.5,1199.0 L4809.7,1204.6 L4814.9,1199.0" stroke="#222" stroke-width="2.25" fill="none"/><path d="M5002.8,1205.6 L5002.8,1181.1000000000001" stroke="#222" stroke-width="2.25" fill="none"/><path d="M4997.2,1186.5 L5002.8,1180.9 L5008.400000000001,1186.5" stroke="#222" stroke-width="2.25" fill="none"/><path d="M5016.7,1179.9 L5016.7,1204.3999999999999" stroke="#222" stroke-width="2.25" fill="none"/><path d="M5011.5,1199.0 L5016.7,1204.6 L5021.9,1199.0" stroke="#222" stroke-width="2.25" fill="none"/><path d="M3021.6,1181.2 L3021.6,1202.4" stroke="#4338c8" stroke-width="2.4" fill="none"/><path d="M3016.6,1198.4 L3021.6,1203.4 L3026.6,1198.4" stroke="#4338c8" stroke-width="2.4" fill="none"/><rect x="3029.4" y="1184.7" width="12.5" height="2.4" fill="#4338c8"/><rect x="3029.4" y="1189.1" width="10.2" height="2.4" fill="#4338c8"/><rect x="3029.4" y="1193.5" width="7.1" height="2.4" fill="#4338c8"/><rect x="3029.4" y="1197.9" width="4.4" height="2.4" fill="#4338c8"/><path d="M2110.5,1181 L2134,1181 L2125,1192.5 L2125,1204.5 L2119.5,1204.5 L2119.5,1192.5 Z" fill="none" stroke="#333" stroke-width="2.2" stroke-linejoin="round"/></svg>
<div style="position:absolute;left:702.6px;top:1304.0px;font-size:24px;line-height:24px;color:#0897ea;font-weight:400;white-space:nowrap;letter-spacing:-0.40px;-webkit-text-stroke:0.7px #0897ea;">3,192</div>
<div style="position:absolute;left:847px;top:1303.8px;font-size:24px;line-height:24px;color:#333;font-weight:400;white-space:nowrap;">exec [dbo].[uspGetAllOrderInfo]</div>
<div style="position:absolute;left:1922.4px;top:1303.8px;font-size:24px;line-height:24px;color:#333;font-weight:400;white-space:nowrap;">ADWorks</div>
<div style="position:absolute;left:2178px;top:1303.8px;font-size:24px;line-height:24px;color:#333;font-weight:400;white-space:nowrap;">10:08:11.2100000</div>
<div style="position:absolute;left:2403px;top:1303.8px;font-size:24px;line-height:24px;color:#333;font-weight:400;white-space:nowrap;">-</div>
<div style="position:absolute;left:2590px;top:1303.8px;font-size:24px;line-height:24px;color:#333;font-weight:400;white-space:nowrap;">-</div>
<div style="position:absolute;left:2762px;top:1303.8px;font-size:24px;line-height:24px;color:#333;font-weight:400;white-space:nowrap;">33346531</div>
<div style="position:absolute;left:2906px;top:1303.8px;font-size:24px;line-height:24px;color:#333;font-weight:400;white-space:nowrap;">3238707766</div>
<div style="position:absolute;left:3071px;top:1303.8px;font-size:24px;line-height:24px;color:#333;font-weight:400;white-space:nowrap;">94071</div>
<div style="position:absolute;left:3228.4px;top:1303.8px;font-size:24px;line-height:24px;color:#333;font-weight:400;white-space:nowrap;">0</div>
<div style="position:absolute;left:3403px;top:1303.8px;font-size:24px;line-height:24px;color:#333;font-weight:400;white-space:nowrap;">0</div>
<div style="position:absolute;left:3600.6px;top:1303.8px;font-size:24px;line-height:24px;color:#333;font-weight:400;white-space:nowrap;">0</div>
<div style="position:absolute;left:3813px;top:1303.8px;font-size:24px;line-height:24px;color:#333;font-weight:400;white-space:nowrap;">0</div>
<div style="position:absolute;left:4043.5px;top:1303.8px;font-size:24px;line-height:24px;color:#333;font-weight:400;white-space:nowrap;">22176</div>
<div style="position:absolute;left:4242px;top:1303.8px;font-size:24px;line-height:24px;color:#333;font-weight:400;white-space:nowrap;">0</div>
<div style="position:absolute;left:4438.6px;top:1303.8px;font-size:24px;line-height:24px;color:#333;font-weight:400;white-space:nowrap;">0</div>
<div style="position:absolute;left:4652.6px;top:1303.8px;font-size:24px;line-height:24px;color:#333;font-weight:400;white-space:nowrap;">0</div>
<div style="position:absolute;left:4842.7px;top:1303.8px;font-size:24px;line-height:24px;color:#333;font-weight:400;white-space:nowrap;">0</div>
<div style="position:absolute;left:676px;top:1352px;width:4359px;height:2px;background:#e3e6ea"></div>
<div style="position:absolute;left:702.6px;top:1390.7px;font-size:24px;line-height:24px;color:#0897ea;font-weight:400;white-space:nowrap;letter-spacing:-0.40px;-webkit-text-stroke:0.7px #0897ea;">3</div>
<div style="position:absolute;left:847px;top:1390.5px;font-size:24px;line-height:24px;color:#333;font-weight:400;white-space:nowrap;">select FirstName from dbo.Customer</div>
<div style="position:absolute;left:1922.4px;top:1390.5px;font-size:24px;line-height:24px;color:#333;font-weight:400;white-space:nowrap;">AutoDealershipDemo</div>
<div style="position:absolute;left:2178px;top:1390.5px;font-size:24px;line-height:24px;color:#333;font-weight:400;white-space:nowrap;">00:02:52.2130000</div>
<div style="position:absolute;left:2403px;top:1390.5px;font-size:24px;line-height:24px;color:#333;font-weight:400;white-space:nowrap;">-</div>
<div style="position:absolute;left:2590px;top:1390.5px;font-size:24px;line-height:24px;color:#333;font-weight:400;white-space:nowrap;">-</div>
<div style="position:absolute;left:2762px;top:1390.5px;font-size:24px;line-height:24px;color:#333;font-weight:400;white-space:nowrap;">203</div>
<div style="position:absolute;left:2906px;top:1390.5px;font-size:24px;line-height:24px;color:#333;font-weight:400;white-space:nowrap;">7254</div>
<div style="position:absolute;left:3071px;top:1390.5px;font-size:24px;line-height:24px;color:#333;font-weight:400;white-space:nowrap;">0</div>
<div style="position:absolute;left:1792.8000000000002px;width:3000px;text-align:center;top:1389.5px;font-size:28px;line-height:28px;color:#0897ea;font-weight:400;white-space:nowrap;letter-spacing:-0.10px;-webkit-text-stroke:0.8px #0897ea;">58106</div>
<div style="position:absolute;left:3403px;top:1390.5px;font-size:24px;line-height:24px;color:#333;font-weight:400;white-space:nowrap;">0</div>
<div style="position:absolute;left:3600.6px;top:1390.5px;font-size:24px;line-height:24px;color:#333;font-weight:400;white-space:nowrap;">0</div>
<div style="position:absolute;left:3813px;top:1390.5px;font-size:24px;line-height:24px;color:#333;font-weight:400;white-space:nowrap;">0</div>
<div style="position:absolute;left:4043.5px;top:1390.5px;font-size:24px;line-height:24px;color:#333;font-weight:400;white-space:nowrap;">24</div>
<div style="position:absolute;left:4242px;top:1390.5px;font-size:24px;line-height:24px;color:#333;font-weight:400;white-space:nowrap;">0</div>
<div style="position:absolute;left:4438.6px;top:1390.5px;font-size:24px;line-height:24px;color:#333;font-weight:400;white-space:nowrap;">0</div>
<div style="position:absolute;left:4652.6px;top:1390.5px;font-size:24px;line-height:24px;color:#333;font-weight:400;white-space:nowrap;">0</div>
<div style="position:absolute;left:4842.7px;top:1390.5px;font-size:24px;line-height:24px;color:#333;font-weight:400;white-space:nowrap;">0</div>
<div style="position:absolute;left:676px;top:1456px;width:4359px;height:2px;background:#e3e6ea"></div>
<div style="position:absolute;left:702.6px;top:1493.4px;font-size:24px;line-height:24px;color:#0897ea;font-weight:400;white-space:nowrap;letter-spacing:-0.40px;-webkit-text-stroke:0.7px #0897ea;">47</div>
<div style="position:absolute;left:847px;top:1493.2px;font-size:24px;line-height:24px;color:#333;font-weight:400;white-space:nowrap;">select * from sysobjects waitfor delay $</div>
<div style="position:absolute;left:1922.4px;top:1493.2px;font-size:24px;line-height:24px;color:#333;font-weight:400;white-space:nowrap;">master</div>
<div style="position:absolute;left:2178px;top:1493.2px;font-size:24px;line-height:24px;color:#333;font-weight:400;white-space:nowrap;">00:03:59.2530000</div>
<div style="position:absolute;left:2403px;top:1493.2px;font-size:24px;line-height:24px;color:#333;font-weight:400;white-space:nowrap;">-</div>
<div style="position:absolute;left:2590px;top:1493.2px;font-size:24px;line-height:24px;color:#333;font-weight:400;white-space:nowrap;">-</div>
<div style="position:absolute;left:2762px;top:1493.2px;font-size:24px;line-height:24px;color:#333;font-weight:400;white-space:nowrap;">1219</div>
<div style="position:absolute;left:2906px;top:1493.2px;font-size:24px;line-height:24px;color:#333;font-weight:400;white-space:nowrap;">2491</div>
<div style="position:absolute;left:3071px;top:1493.2px;font-size:24px;line-height:24px;color:#333;font-weight:400;white-space:nowrap;">0</div>
<div style="position:absolute;left:1792.8000000000002px;width:3000px;text-align:center;top:1492.3px;font-size:28px;line-height:28px;color:#0897ea;font-weight:400;white-space:nowrap;letter-spacing:-0.10px;-webkit-text-stroke:0.8px #0897ea;">64298</div>
<div style="position:absolute;left:3403px;top:1493.2px;font-size:24px;line-height:24px;color:#333;font-weight:400;white-space:nowrap;">0</div>
<div style="position:absolute;left:3600.6px;top:1493.2px;font-size:24px;line-height:24px;color:#333;font-weight:400;white-space:nowrap;">0</div>
<div style="position:absolute;left:3813px;top:1493.2px;font-size:24px;line-height:24px;color:#333;font-weight:400;white-space:nowrap;">0</div>
<div style="position:absolute;left:4043.5px;top:1493.2px;font-size:24px;line-height:24px;color:#333;font-weight:400;white-space:nowrap;">0</div>
<div style="position:absolute;left:4242px;top:1493.2px;font-size:24px;line-height:24px;color:#333;font-weight:400;white-space:nowrap;">0</div>
<div style="position:absolute;left:4438.6px;top:1493.2px;font-size:24px;line-height:24px;color:#333;font-weight:400;white-space:nowrap;">0</div>
<div style="position:absolute;left:4652.6px;top:1493.2px;font-size:24px;line-height:24px;color:#333;font-weight:400;white-space:nowrap;">0</div>
<div style="position:absolute;left:4842.7px;top:1493.2px;font-size:24px;line-height:24px;color:#333;font-weight:400;white-space:nowrap;">0</div>
<div style="position:absolute;left:676px;top:1557.5px;width:4359px;height:2.0px;background:#e3e6ea"></div>
<div style="position:absolute;left:702.6px;top:1595.9px;font-size:24px;line-height:24px;color:#0897ea;font-weight:400;white-space:nowrap;letter-spacing:-0.40px;-webkit-text-stroke:0.7px #0897ea;">132</div>
<div style="position:absolute;left:847px;top:1595.7px;font-size:24px;line-height:24px;color:#333;font-weight:400;white-space:nowrap;">SELECT COUNT(*) FROM msdb.dbo.sysjobs WAITFOR DELAY $</div>
<div style="position:absolute;left:1922.4px;top:1595.7px;font-size:24px;line-height:24px;color:#333;font-weight:400;white-space:nowrap;">tempdb</div>
<div style="position:absolute;left:2178px;top:1595.7px;font-size:24px;line-height:24px;color:#333;font-weight:400;white-space:nowrap;">02:01:00.8980000</div>
<div style="position:absolute;left:2403px;top:1595.7px;font-size:24px;line-height:24px;color:#333;font-weight:400;white-space:nowrap;">-</div>
<div style="position:absolute;left:2590px;top:1595.7px;font-size:24px;line-height:24px;color:#333;font-weight:400;white-space:nowrap;">-</div>
<div style="position:absolute;left:2762px;top:1595.7px;font-size:24px;line-height:24px;color:#333;font-weight:400;white-space:nowrap;">15</div>
<div style="position:absolute;left:2906px;top:1595.7px;font-size:24px;line-height:24px;color:#333;font-weight:400;white-space:nowrap;">264</div>
<div style="position:absolute;left:3071px;top:1595.7px;font-size:24px;line-height:24px;color:#333;font-weight:400;white-space:nowrap;">0</div>
<div style="position:absolute;left:1792.8000000000002px;width:3000px;text-align:center;top:1594.8px;font-size:28px;line-height:28px;color:#0897ea;font-weight:400;white-space:nowrap;letter-spacing:-0.10px;-webkit-text-stroke:0.8px #0897ea;">1356587</div>
<div style="position:absolute;left:3403px;top:1595.7px;font-size:24px;line-height:24px;color:#333;font-weight:400;white-space:nowrap;">0</div>
<div style="position:absolute;left:3600.6px;top:1595.7px;font-size:24px;line-height:24px;color:#333;font-weight:400;white-space:nowrap;">0</div>
<div style="position:absolute;left:3813px;top:1595.7px;font-size:24px;line-height:24px;color:#333;font-weight:400;white-space:nowrap;">0</div>
<div style="position:absolute;left:4043.5px;top:1595.7px;font-size:24px;line-height:24px;color:#333;font-weight:400;white-space:nowrap;">456</div>
<div style="position:absolute;left:4242px;top:1595.7px;font-size:24px;line-height:24px;color:#333;font-weight:400;white-space:nowrap;">0</div>
<div style="position:absolute;left:4438.6px;top:1595.7px;font-size:24px;line-height:24px;color:#333;font-weight:400;white-space:nowrap;">0</div>
<div style="position:absolute;left:4652.6px;top:1595.7px;font-size:24px;line-height:24px;color:#333;font-weight:400;white-space:nowrap;">0</div>
<div style="position:absolute;left:4842.7px;top:1595.7px;font-size:24px;line-height:24px;color:#333;font-weight:400;white-space:nowrap;">0</div>
<div style="position:absolute;left:676px;top:1661px;width:4359px;height:2px;background:#e3e6ea"></div>
<div style="position:absolute;left:702.6px;top:1699.2px;font-size:24px;line-height:24px;color:#0897ea;font-weight:400;white-space:nowrap;letter-spacing:-0.40px;-webkit-text-stroke:0.7px #0897ea;">14</div>
<div style="position:absolute;left:847px;top:1699.0px;font-size:24px;line-height:24px;color:#333;font-weight:400;white-space:nowrap;">SELECT COUNT(*) FROM msdb.dbo.sysjobs WAITFOR DELAY $</div>
<div style="position:absolute;left:1922.4px;top:1699.0px;font-size:24px;line-height:24px;color:#333;font-weight:400;white-space:nowrap;">tempdb</div>
<div style="position:absolute;left:2178px;top:1699.0px;font-size:24px;line-height:24px;color:#333;font-weight:400;white-space:nowrap;">00:12:08.8080000</div>
<div style="position:absolute;left:2403px;top:1699.0px;font-size:24px;line-height:24px;color:#333;font-weight:400;white-space:nowrap;">-</div>
<div style="position:absolute;left:2590px;top:1699.0px;font-size:24px;line-height:24px;color:#333;font-weight:400;white-space:nowrap;">-</div>
<div style="position:absolute;left:2762px;top:1699.0px;font-size:24px;line-height:24px;color:#333;font-weight:400;white-space:nowrap;">0</div>
<div style="position:absolute;left:2906px;top:1699.0px;font-size:24px;line-height:24px;color:#333;font-weight:400;white-space:nowrap;">28</div>
<div style="position:absolute;left:3071px;top:1699.0px;font-size:24px;line-height:24px;color:#333;font-weight:400;white-space:nowrap;">0</div>
<div style="position:absolute;left:1792.8000000000002px;width:3000px;text-align:center;top:1698.0px;font-size:28px;line-height:28px;color:#0897ea;font-weight:400;white-space:nowrap;letter-spacing:-0.10px;-webkit-text-stroke:0.8px #0897ea;">765084</div>
<div style="position:absolute;left:3403px;top:1699.0px;font-size:24px;line-height:24px;color:#333;font-weight:400;white-space:nowrap;">0</div>
<div style="position:absolute;left:3600.6px;top:1699.0px;font-size:24px;line-height:24px;color:#333;font-weight:400;white-space:nowrap;">0</div>
<div style="position:absolute;left:3813px;top:1699.0px;font-size:24px;line-height:24px;color:#333;font-weight:400;white-space:nowrap;">0</div>
<div style="position:absolute;left:4043.5px;top:1699.0px;font-size:24px;line-height:24px;color:#333;font-weight:400;white-space:nowrap;">336</div>
<div style="position:absolute;left:4242px;top:1699.0px;font-size:24px;line-height:24px;color:#333;font-weight:400;white-space:nowrap;">0</div>
<div style="position:absolute;left:4438.6px;top:1699.0px;font-size:24px;line-height:24px;color:#333;font-weight:400;white-space:nowrap;">0</div>
<div style="position:absolute;left:4652.6px;top:1699.0px;font-size:24px;line-height:24px;color:#333;font-weight:400;white-space:nowrap;">0</div>
<div style="position:absolute;left:4842.7px;top:1699.0px;font-size:24px;line-height:24px;color:#333;font-weight:400;white-space:nowrap;">0</div>
<div style="position:absolute;left:676px;top:1764px;width:4359px;height:2px;background:#e3e6ea"></div>
<div style="position:absolute;left:702.6px;top:1787.3px;font-size:24px;line-height:24px;color:#0897ea;font-weight:400;white-space:nowrap;letter-spacing:-0.40px;-webkit-text-stroke:0.7px #0897ea;">2</div>
<div style="position:absolute;left:847px;top:1787.1px;font-size:24px;line-height:24px;color:#333;font-weight:400;white-space:nowrap;">Declare @ID int; SET @ID=(select round(rand()*#,#)) begin tran update dbo.customer set FirstN...</div>
<div style="position:absolute;left:1922.4px;top:1787.1px;font-size:24px;line-height:24px;color:#333;font-weight:400;white-space:nowrap;">AutoDealershipDemo</div>
<div style="position:absolute;left:2178px;top:1787.1px;font-size:24px;line-height:24px;color:#333;font-weight:400;white-space:nowrap;">00:02:00.0010000</div>
<div style="position:absolute;left:2403px;top:1787.1px;font-size:24px;line-height:24px;color:#333;font-weight:400;white-space:nowrap;">-</div>
<div style="position:absolute;left:2590px;top:1787.1px;font-size:24px;line-height:24px;color:#333;font-weight:400;white-space:nowrap;">-</div>
<div style="position:absolute;left:2762px;top:1787.1px;font-size:24px;line-height:24px;color:#333;font-weight:400;white-space:nowrap;">0</div>
<div style="position:absolute;left:2906px;top:1787.1px;font-size:24px;line-height:24px;color:#333;font-weight:400;white-space:nowrap;">10</div>
<div style="position:absolute;left:3071px;top:1787.1px;font-size:24px;line-height:24px;color:#333;font-weight:400;white-space:nowrap;">2</div>
<div style="position:absolute;left:3228.4px;top:1787.1px;font-size:24px;line-height:24px;color:#333;font-weight:400;white-space:nowrap;">0</div>
<div style="position:absolute;left:3403px;top:1787.1px;font-size:24px;line-height:24px;color:#333;font-weight:400;white-space:nowrap;">0</div>
<div style="position:absolute;left:3600.6px;top:1787.1px;font-size:24px;line-height:24px;color:#333;font-weight:400;white-space:nowrap;">0</div>
<div style="position:absolute;left:3813px;top:1787.1px;font-size:24px;line-height:24px;color:#333;font-weight:400;white-space:nowrap;">0</div>
<div style="position:absolute;left:4043.5px;top:1787.1px;font-size:24px;line-height:24px;color:#333;font-weight:400;white-space:nowrap;">0</div>
<div style="position:absolute;left:4242px;top:1787.1px;font-size:24px;line-height:24px;color:#333;font-weight:400;white-space:nowrap;">0</div>
<div style="position:absolute;left:4438.6px;top:1787.1px;font-size:24px;line-height:24px;color:#333;font-weight:400;white-space:nowrap;">0</div>
<div style="position:absolute;left:4652.6px;top:1787.1px;font-size:24px;line-height:24px;color:#333;font-weight:400;white-space:nowrap;">0</div>
<div style="position:absolute;left:4842.7px;top:1787.1px;font-size:24px;line-height:24px;color:#333;font-weight:400;white-space:nowrap;">0</div>
<div style="position:absolute;left:676px;top:1834.7px;width:4359px;height:2.0px;background:#e3e6ea"></div>
<div style="position:absolute;left:702.6px;top:1873.8px;font-size:24px;line-height:24px;color:#0897ea;font-weight:400;white-space:nowrap;letter-spacing:-0.40px;-webkit-text-stroke:0.7px #0897ea;">1</div>
<div style="position:absolute;left:847px;top:1873.6px;font-size:24px;line-height:24px;color:#333;font-weight:400;white-space:nowrap;">Declare @ID int; SET @ID=(select round(rand()*#,#)) begin tran update dbo.customer set FirstN...</div>
<div style="position:absolute;left:1922.4px;top:1873.6px;font-size:24px;line-height:24px;color:#333;font-weight:400;white-space:nowrap;">AutoDealershipDemo</div>
<div style="position:absolute;left:2178px;top:1873.6px;font-size:24px;line-height:24px;color:#333;font-weight:400;white-space:nowrap;">00:00:56.5100000</div>
<div style="position:absolute;left:2403px;top:1873.6px;font-size:24px;line-height:24px;color:#333;font-weight:400;white-space:nowrap;">-</div>
<div style="position:absolute;left:2590px;top:1873.6px;font-size:24px;line-height:24px;color:#333;font-weight:400;white-space:nowrap;">-</div>
<div style="position:absolute;left:2762px;top:1873.6px;font-size:24px;line-height:24px;color:#333;font-weight:400;white-space:nowrap;">0</div>
<div style="position:absolute;left:2906px;top:1873.6px;font-size:24px;line-height:24px;color:#333;font-weight:400;white-space:nowrap;">4</div>
<div style="position:absolute;left:3071px;top:1873.6px;font-size:24px;line-height:24px;color:#333;font-weight:400;white-space:nowrap;">2</div>
<div style="position:absolute;left:1792.8000000000002px;width:3000px;text-align:center;top:1872.6px;font-size:28px;line-height:28px;color:#0897ea;font-weight:400;white-space:nowrap;letter-spacing:-0.10px;-webkit-text-stroke:0.8px #0897ea;">59744</div>
<div style="position:absolute;left:3403px;top:1873.6px;font-size:24px;line-height:24px;color:#333;font-weight:400;white-space:nowrap;">0</div>
<div style="position:absolute;left:3600.6px;top:1873.6px;font-size:24px;line-height:24px;color:#333;font-weight:400;white-space:nowrap;">0</div>
<div style="position:absolute;left:3813px;top:1873.6px;font-size:24px;line-height:24px;color:#333;font-weight:400;white-space:nowrap;">0</div>
<div style="position:absolute;left:4043.5px;top:1873.6px;font-size:24px;line-height:24px;color:#333;font-weight:400;white-space:nowrap;">24</div>
<div style="position:absolute;left:4242px;top:1873.6px;font-size:24px;line-height:24px;color:#333;font-weight:400;white-space:nowrap;">0</div>
<div style="position:absolute;left:4438.6px;top:1873.6px;font-size:24px;line-height:24px;color:#333;font-weight:400;white-space:nowrap;">0</div>
<div style="position:absolute;left:4652.6px;top:1873.6px;font-size:24px;line-height:24px;color:#333;font-weight:400;white-space:nowrap;">0</div>
<div style="position:absolute;left:4842.7px;top:1873.6px;font-size:24px;line-height:24px;color:#333;font-weight:400;white-space:nowrap;">0</div>
<div style="position:absolute;left:676px;top:1939.5px;width:4359px;height:2.0px;background:#e3e6ea"></div>
<div style="position:absolute;left:702.6px;top:1977.2px;font-size:24px;line-height:24px;color:#0897ea;font-weight:400;white-space:nowrap;letter-spacing:-0.40px;-webkit-text-stroke:0.7px #0897ea;">56</div>
<div style="position:absolute;left:847px;top:1977.0px;font-size:24px;line-height:24px;color:#333;font-weight:400;white-space:nowrap;">SELECT * FROM sys.dm_os_performance_counters</div>
<div style="position:absolute;left:1922.4px;top:1977.0px;font-size:24px;line-height:24px;color:#333;font-weight:400;white-space:nowrap;">master</div>
<div style="position:absolute;left:2178px;top:1977.0px;font-size:24px;line-height:24px;color:#333;font-weight:400;white-space:nowrap;">00:07:32.5460000</div>
<div style="position:absolute;left:2403px;top:1977.0px;font-size:24px;line-height:24px;color:#333;font-weight:400;white-space:nowrap;">00:00:06.081</div>
<div style="position:absolute;left:2590px;top:1977.0px;font-size:24px;line-height:24px;color:#333;font-weight:400;white-space:nowrap;">717.34</div>
<div style="position:absolute;left:2762px;top:1977.0px;font-size:24px;line-height:24px;color:#333;font-weight:400;white-space:nowrap;">134</div>
<div style="position:absolute;left:2906px;top:1977.0px;font-size:24px;line-height:24px;color:#333;font-weight:400;white-space:nowrap;">0</div>
<div style="position:absolute;left:3071px;top:1977.0px;font-size:24px;line-height:24px;color:#333;font-weight:400;white-space:nowrap;">0</div>
<div style="position:absolute;left:1792.8000000000002px;width:3000px;text-align:center;top:1976.0px;font-size:28px;line-height:28px;color:#0897ea;font-weight:400;white-space:nowrap;letter-spacing:-0.10px;-webkit-text-stroke:0.8px #0897ea;">15285</div>
<div style="position:absolute;left:3403px;top:1977.0px;font-size:24px;line-height:24px;color:#333;font-weight:400;white-space:nowrap;">0</div>
<div style="position:absolute;left:3600.6px;top:1977.0px;font-size:24px;line-height:24px;color:#333;font-weight:400;white-space:nowrap;">0</div>
<div style="position:absolute;left:3813px;top:1977.0px;font-size:24px;line-height:24px;color:#333;font-weight:400;white-space:nowrap;">0</div>
<div style="position:absolute;left:4043.5px;top:1977.0px;font-size:24px;line-height:24px;color:#333;font-weight:400;white-space:nowrap;">0</div>
<div style="position:absolute;left:4242px;top:1977.0px;font-size:24px;line-height:24px;color:#333;font-weight:400;white-space:nowrap;">0</div>
<div style="position:absolute;left:4438.6px;top:1977.0px;font-size:24px;line-height:24px;color:#333;font-weight:400;white-space:nowrap;">0</div>
<div style="position:absolute;left:4652.6px;top:1977.0px;font-size:24px;line-height:24px;color:#333;font-weight:400;white-space:nowrap;">0</div>
<div style="position:absolute;left:4842.7px;top:1977.0px;font-size:24px;line-height:24px;color:#333;font-weight:400;white-space:nowrap;">0</div>
<div style="position:absolute;left:676px;top:2041.5px;width:4359px;height:2.0px;background:#e3e6ea"></div>
<svg style="position:absolute;left:2420px;top:2055px;" width="400" height="90" viewBox="2420 2055 400 90"><polyline points="2441,2094 2435,2101 2441,2108" fill="none" stroke="#999" stroke-width="2"/><polyline points="2450,2094 2444,2101 2450,2108" fill="none" stroke="#999" stroke-width="2"/><polyline points="2535,2094 2528,2101 2535,2108" fill="none" stroke="#999" stroke-width="2"/><circle cx="2616.8" cy="2100.5" r="38.8" fill="#eceffb"/><polyline points="2699,2094 2706,2101 2699,2108" fill="none" stroke="#999" stroke-width="2"/><polyline points="2781,2094 2787,2101 2781,2108" fill="none" stroke="#999" stroke-width="2"/><polyline points="2790,2094 2796,2101 2790,2108" fill="none" stroke="#999" stroke-width="2"/></svg>
<div style="position:absolute;left:1117px;width:3000px;text-align:center;top:2089.1px;font-size:24px;line-height:24px;color:#4338c8;font-weight:400;white-space:nowrap;">1</div>
<div style="position:absolute;left:2851.7px;top:2089.2px;font-size:23.8px;line-height:23.8px;color:#555;font-weight:400;white-space:nowrap;">Showing 1 to 8 of 8 records</div>
<div style="position:absolute;left:3174.5px;top:2062.5px;width:135.0px;height:76.5px;box-sizing:border-box;border:2px solid #d5d9de;border-radius:10px;background:#fff"></div>
<div style="position:absolute;left:3199.5px;top:2089.1px;font-size:24px;line-height:24px;color:#333;font-weight:400;white-space:nowrap;">15</div>
<svg style="position:absolute;left:3250px;top:2090px;" width="32" height="22" viewBox="3250 2090 32 22"><polyline points="3254,2095 3265.5,2106 3277,2095" fill="none" stroke="#444" stroke-width="2.8"/></svg>
<div style="position:absolute;left:676px;top:2184px;width:4359px;height:295px;background:#fff;border-radius:6px;box-shadow:0 1.5px 1.5px rgba(0,0,0,0.34), 0 0 2.5px rgba(0,0,0,0.12);"></div>
<div style="position:absolute;left:702.8px;top:2212.3px;font-size:32px;line-height:32px;color:#6e6e6e;font-weight:400;white-space:nowrap;letter-spacing:2.52px;-webkit-text-stroke:1.05px #6e6e6e;">Statements</div>
<div style="position:absolute;left:676px;top:2270px;width:4359px;height:64px;background:#f4f4f4"></div>
<div style="position:absolute;left:3899px;top:2270px;width:566px;height:64px;background:#eef0fb"></div>
<div style="position:absolute;left:676px;top:2333px;width:4359px;height:2px;background:#e3e6ea"></div>
<div style="position:absolute;left:691.4px;top:2286.6px;font-size:27px;line-height:27px;color:#1a1a1a;font-weight:400;white-space:nowrap;letter-spacing:0.08px;-webkit-text-stroke:0.65px #1a1a1a;">Events</div>
<div style="position:absolute;left:1160.5px;top:2286.6px;font-size:27px;line-height:27px;color:#1a1a1a;font-weight:400;white-space:nowrap;letter-spacing:0.08px;-webkit-text-stroke:0.65px #1a1a1a;">Text Data</div>
<div style="position:absolute;left:2249.6px;top:2286.6px;font-size:27px;line-height:27px;color:#1a1a1a;font-weight:400;white-space:nowrap;letter-spacing:0.08px;-webkit-text-stroke:0.65px #1a1a1a;">Duration</div>
<div style="position:absolute;left:2911.5px;top:2286.6px;font-size:27px;line-height:27px;color:#1a1a1a;font-weight:400;white-space:nowrap;letter-spacing:0.08px;-webkit-text-stroke:0.65px #1a1a1a;">Count</div>
<div style="position:absolute;left:3351.7px;top:2286.6px;font-size:27px;line-height:27px;color:#1a1a1a;font-weight:400;white-space:nowrap;letter-spacing:0.08px;-webkit-text-stroke:0.65px #1a1a1a;">CPU (ms)</div>
<div style="position:absolute;left:3914px;top:2286.6px;font-size:27px;line-height:27px;color:#4338c8;font-weight:400;white-space:nowrap;letter-spacing:0.08px;-webkit-text-stroke:0.65px #4338c8;">Reads (L)</div>
<div style="position:absolute;left:4480px;top:2286.6px;font-size:27px;line-height:27px;color:#1a1a1a;font-weight:400;white-space:nowrap;letter-spacing:0.08px;-webkit-text-stroke:0.65px #1a1a1a;">Writes (L)</div>
<svg style="position:absolute;left:680px;top:2280px;" width="4350" height="40" viewBox="680 2280 4350 40"><path d="M797.3,2312.1 L797.3,2287.6" stroke="#222" stroke-width="2.25" fill="none"/><path d="M791.6999999999999,2293.0 L797.3,2287.4 L802.9,2293.0" stroke="#222" stroke-width="2.25" fill="none"/><path d="M811.1999999999999,2286.4 L811.1999999999999,2310.9" stroke="#222" stroke-width="2.25" fill="none"/><path d="M805.9999999999999,2305.5 L811.1999999999999,2311.1 L816.4,2305.5" stroke="#222" stroke-width="2.25" fill="none"/><path d="M1294.5,2312.1 L1294.5,2287.6" stroke="#222" stroke-width="2.25" fill="none"/><path d="M1288.9,2293.0 L1294.5,2287.4 L1300.1,2293.0" stroke="#222" stroke-width="2.25" fill="none"/><path d="M1308.4,2286.4 L1308.4,2310.9" stroke="#222" stroke-width="2.25" fill="none"/><path d="M1303.2,2305.5 L1308.4,2311.1 L1313.6000000000001,2305.5" stroke="#222" stroke-width="2.25" fill="none"/><path d="M2376.0,2312.1 L2376.0,2287.6" stroke="#222" stroke-width="2.25" fill="none"/><path d="M2370.4,2293.0 L2376.0,2287.4 L2381.6,2293.0" stroke="#222" stroke-width="2.25" fill="none"/><path d="M2389.9,2286.4 L2389.9,2310.9" stroke="#222" stroke-width="2.25" fill="none"/><path d="M2384.7000000000003,2305.5 L2389.9,2311.1 L2395.1,2305.5" stroke="#222" stroke-width="2.25" fill="none"/><path d="M3009.0,2312.1 L3009.0,2287.6" stroke="#222" stroke-width="2.25" fill="none"/><path d="M3003.4,2293.0 L3009.0,2287.4 L3014.6,2293.0" stroke="#222" stroke-width="2.25" fill="none"/><path d="M3022.9,2286.4 L3022.9,2310.9" stroke="#222" stroke-width="2.25" fill="none"/><path d="M3017.7000000000003,2305.5 L3022.9,2311.1 L3028.1,2305.5" stroke="#222" stroke-width="2.25" fill="none"/><path d="M3488.5,2312.1 L3488.5,2287.6" stroke="#222" stroke-width="2.25" fill="none"/><path d="M3482.9,2293.0 L3488.5,2287.4 L3494.1,2293.0" stroke="#222" stroke-width="2.25" fill="none"/><path d="M3502.4,2286.4 L3502.4,2310.9" stroke="#222" stroke-width="2.25" fill="none"/><path d="M3497.2000000000003,2305.5 L3502.4,2311.1 L3507.6,2305.5" stroke="#222" stroke-width="2.25" fill="none"/><path d="M4619.5,2312.1 L4619.5,2287.6" stroke="#222" stroke-width="2.25" fill="none"/><path d="M4613.9,2293.0 L4619.5,2287.4 L4625.1,2293.0" stroke="#222" stroke-width="2.25" fill="none"/><path d="M4633.4,2286.4 L4633.4,2310.9" stroke="#222" stroke-width="2.25" fill="none"/><path d="M4628.2,2305.5 L4633.4,2311.1 L4638.599999999999,2305.5" stroke="#222" stroke-width="2.25" fill="none"/><path d="M4050.5,2287.7 L4050.5,2308.9" stroke="#4338c8" stroke-width="2.4" fill="none"/><path d="M4045.5,2304.9 L4050.5,2309.9 L4055.5,2304.9" stroke="#4338c8" stroke-width="2.4" fill="none"/><rect x="4058.3" y="2291.2" width="12.5" height="2.4" fill="#4338c8"/><rect x="4058.3" y="2295.6" width="10.2" height="2.4" fill="#4338c8"/><rect x="4058.3" y="2300.0" width="7.1" height="2.4" fill="#4338c8"/><rect x="4058.3" y="2304.4" width="4.4" height="2.4" fill="#4338c8"/></svg>
<div style="position:absolute;left:702.8px;top:2356.2px;font-size:24px;line-height:24px;color:#0897ea;font-weight:400;white-space:nowrap;">2,636</div>
<div style="position:absolute;left:1160.5px;top:2355.5px;font-size:24px;line-height:24px;color:#333;font-weight:400;white-space:nowrap;">exec [dbo].[uspGetAllOrderInfo]</div>
<div style="position:absolute;left:2249.6px;top:2355.5px;font-size:24px;line-height:24px;color:#333;font-weight:400;white-space:nowrap;">08:32:37.7680000</div>
<div style="position:absolute;left:2911.5px;top:2355.5px;font-size:24px;line-height:24px;color:#333;font-weight:400;white-space:nowrap;">0</div>
<div style="position:absolute;left:3351.7px;top:2355.5px;font-size:24px;line-height:24px;color:#333;font-weight:400;white-space:nowrap;">28029084</div>
<div style="position:absolute;left:3914px;top:2355.5px;font-size:24px;line-height:24px;color:#333;font-weight:400;white-space:nowrap;">2732506561</div>
<div style="position:absolute;left:4480px;top:2355.5px;font-size:24px;line-height:24px;color:#333;font-weight:400;white-space:nowrap;">79945</div>
<div style="position:absolute;left:702.8px;top:2429.4px;font-size:23.2px;line-height:23.2px;color:#b5b5b5;font-weight:400;white-space:nowrap;">0</div>
<div style="position:absolute;left:1160.5px;top:2428.0px;font-size:24px;line-height:24px;color:#333;font-weight:400;white-space:nowrap;">fetch next from c into @sID</div>
<div style="position:absolute;left:2249.6px;top:2428.0px;font-size:24px;line-height:24px;color:#333;font-weight:400;white-space:nowrap;">01:00:20.0960000</div>
<div style="position:absolute;left:2911.5px;top:2428.0px;font-size:24px;line-height:24px;color:#333;font-weight:400;white-space:nowrap;">73714477</div>
<div style="position:absolute;left:3351.7px;top:2428.0px;font-size:24px;line-height:24px;color:#333;font-weight:400;white-space:nowrap;">3457224</div>
<div style="position:absolute;left:3914px;top:2428.0px;font-size:24px;line-height:24px;color:#333;font-weight:400;white-space:nowrap;">296316526</div>
<div style="position:absolute;left:4480px;top:2428.0px;font-size:24px;line-height:24px;color:#333;font-weight:400;white-space:nowrap;">0</div>
<div style="position:absolute;left:676px;top:2405.5px;width:4359px;height:2.0px;background:#e3e6ea"></div>
<div style="position:absolute;left:676px;top:2503.6px;width:2167.5px;height:196.4000000000001px;background:#fff;border-radius:6px;box-shadow:0 1.5px 1.5px rgba(0,0,0,0.34), 0 0 2.5px rgba(0,0,0,0.12);"></div>
<div style="position:absolute;left:701px;top:2538.4px;font-size:32px;line-height:32px;color:#6e6e6e;font-weight:400;white-space:nowrap;letter-spacing:2.75px;-webkit-text-stroke:1.05px #6e6e6e;">Query History</div>
<div style="position:absolute;left:1180.5px;top:2537.8px;width:1609.5px;height:35.19999999999982px;background:#b3dcf5;border-radius:9px"></div>
<div style="position:absolute;left:2681px;top:2537.8px;width:111px;height:35.19999999999982px;background:#0099ee"></div>
<svg style="position:absolute;left:2650px;top:2522px;" width="175" height="63" viewBox="2650 2522 175 63"><circle cx="2681" cy="2553" r="24" fill="#fff" stroke="#0099ee" stroke-width="3.6"/><circle cx="2791.6" cy="2553" r="24" fill="#fff" stroke="#0099ee" stroke-width="3.6"/></svg>
<div style="position:absolute;left:-320px;width:3000px;text-align:center;top:2588.8px;font-size:19.7px;line-height:19.7px;color:#111;font-weight:700;white-space:nowrap;">2023-08-27</div>
<div style="position:absolute;left:1282.6px;width:3000px;text-align:center;top:2588.8px;font-size:19.7px;line-height:19.7px;color:#111;font-weight:700;white-space:nowrap;">2023-10-11</div>
<svg style="position:absolute;left:780px;top:2620px;" width="2040" height="16" viewBox="780 2620 2040 16"><rect x="831.4" y="2627" width="1973" height="20" fill="#f2f2f2" stroke="#d6d6d6" stroke-width="2"/><rect x="896.6" y="2628" width="2" height="12" fill="#d2d2d2"/><rect x="1269.2" y="2628" width="2" height="12" fill="#d2d2d2"/><rect x="1641.8" y="2628" width="2" height="12" fill="#d2d2d2"/><rect x="2014.4" y="2628" width="2" height="12" fill="#d2d2d2"/><rect x="2387" y="2628" width="2" height="12" fill="#d2d2d2"/><rect x="2788.4" y="2628" width="2.4" height="10" fill="#e06666"/><rect x="820" y="2627" width="11" height="2" fill="#333"/><rect x="829.5" y="2627" width="2" height="9" fill="#333"/></svg>
<div style="position:absolute;left:780.5px;top:2626.1px;font-size:20px;line-height:20px;color:#555;font-weight:400;white-space:nowrap;">18K</div>
<div style="position:absolute;left:2868px;top:2504px;width:2167px;height:196px;background:#fff;border-radius:6px;box-shadow:0 1.5px 1.5px rgba(0,0,0,0.34), 0 0 2.5px rgba(0,0,0,0.12);"></div>
<div style="position:absolute;left:2868px;top:2504px;width:2167px;height:83.5px;background:#f4f4f4;border-radius:6px 6px 0 0"></div>
<div style="position:absolute;left:2980px;top:2583px;width:320px;height:4.5px;background:#0897ea"></div>
<svg style="position:absolute;left:2900px;top:2525px;" width="45" height="40" viewBox="2900 2525 45 40"><path d="M2910.5,2540 L2910.5,2532.5 L2918,2532.5" fill="none" stroke="#555" stroke-width="3.4"/><path d="M2930,2532.5 L2937.5,2532.5 L2937.5,2540" fill="none" stroke="#555" stroke-width="3.4"/><path d="M2910.5,2551 L2910.5,2558.5 L2918,2558.5" fill="none" stroke="#555" stroke-width="3.4"/><path d="M2930,2558.5 L2937.5,2558.5 L2937.5,2551" fill="none" stroke="#555" stroke-width="3.4"/></svg>
<div style="position:absolute;left:3007.8px;top:2528.7px;font-size:32px;line-height:32px;color:#0897ea;font-weight:400;white-space:nowrap;letter-spacing:2.44px;-webkit-text-stroke:1.3px #0897ea;">PLAN DIAGRAM</div>
<div style="position:absolute;left:3368.3px;top:2528.7px;font-size:32px;line-height:32px;color:#666;font-weight:400;white-space:nowrap;letter-spacing:1.92px;-webkit-text-stroke:1.3px #666;">TEXT DATA</div>
<div style="position:absolute;left:3661.7px;top:2528.7px;font-size:32px;line-height:32px;color:#666;font-weight:400;white-space:nowrap;letter-spacing:2.27px;-webkit-text-stroke:1.3px #666;">PARAMETERS</div>
<div style="position:absolute;left:4012.8px;top:2528.7px;font-size:32px;line-height:32px;color:#666;font-weight:400;white-space:nowrap;letter-spacing:2.27px;-webkit-text-stroke:1.3px #666;">PLAN XML</div>
<div style="position:absolute;left:4412.6px;top:2424.6px;font-size:39px;line-height:39px;color:rgba(120,120,120,0.5);font-weight:400;white-space:nowrap;letter-spacing:0.30px;">Activate Windows</div>
<div style="position:absolute;left:4412.6px;top:2474.9px;font-size:28.5px;line-height:28.5px;color:rgba(120,120,120,0.5);font-weight:400;white-space:nowrap;letter-spacing:0.72px;">Go to Settings to activate Windows.</div></body></html>
